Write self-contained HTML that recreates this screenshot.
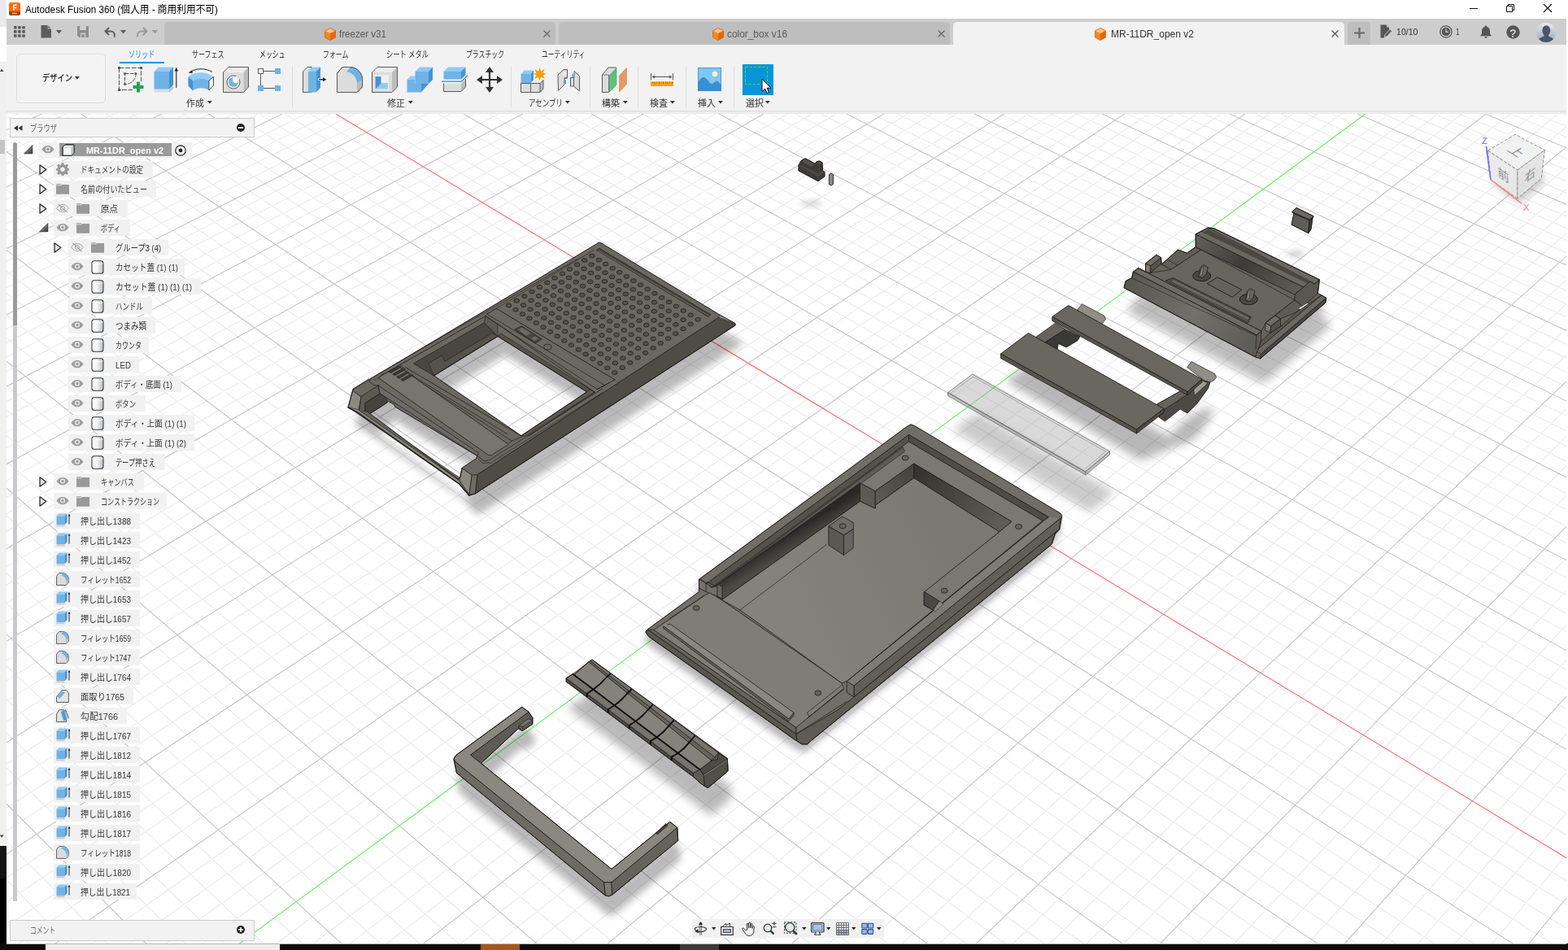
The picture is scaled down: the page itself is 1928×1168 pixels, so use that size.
<!DOCTYPE html><html lang="ja"><head><meta charset="utf-8"><title>Autodesk Fusion 360</title><style>
html,body{margin:0;padding:0}
body{width:1928px;height:1168px;overflow:hidden;position:relative;background:#fff;font-family:"Liberation Sans","Noto Sans CJK JP",sans-serif}
.a{position:absolute}
.t{position:absolute;white-space:nowrap;transform-origin:0 50%;display:block}
.rb{position:absolute;height:20px;background:#f1f1f1}
svg{position:absolute;overflow:visible}
</style></head><body>
<svg class="a" style="left:0;top:0" width="1928" height="1168" viewBox="0 0 1928 1168"><defs><clipPath id="cv"><rect x="8" y="140" width="1918" height="1020"/></clipPath></defs><g clip-path="url(#cv)"><path d="M8.0 146.3L22.0 140.0M8.0 173.4L81.1 140.0M8.0 187.3L110.7 140.0M8.0 201.4L140.2 140.0M8.0 215.6L169.8 140.0M8.0 244.8L229.0 140.0M8.0 259.6L258.5 140.0M8.0 274.8L288.1 140.0M8.0 290.1L317.7 140.0M8.0 321.5L376.8 140.0M8.0 337.5L406.4 140.0M8.0 353.8L436.0 140.0M8.0 370.3L465.6 140.0M8.0 404.2L524.7 140.0M8.0 421.5L554.3 140.0M8.0 439.1L583.9 140.0M8.0 457.0L613.5 140.0M8.0 493.7L672.6 140.0M8.0 512.5L702.2 140.0M8.0 531.6L731.8 140.0M8.0 551.0L761.4 140.0M8.0 590.8L820.6 140.0M8.0 611.2L850.2 140.0M8.0 632.0L879.7 140.0M8.0 653.2L909.3 140.0M8.0 696.6L968.5 140.0M8.0 718.9L998.1 140.0M8.0 741.6L1027.7 140.0M8.0 764.7L1057.3 140.0M8.0 812.2L1116.5 140.0M8.0 836.7L1146.1 140.0M8.0 861.6L1175.7 140.0M8.0 887.0L1205.3 140.0M8.0 939.2L1264.5 140.0M8.0 966.1L1294.1 140.0M8.0 993.5L1323.7 140.0M8.0 1021.5L1353.3 140.0M8.0 1079.2L1412.5 140.0M8.0 1108.9L1442.1 140.0M8.0 1139.3L1471.7 140.0M23.0 1160.0L1501.3 140.0M113.5 1160.0L1560.5 140.0M158.8 1160.0L1590.1 140.0M204.1 1160.0L1619.8 140.0M249.3 1160.0L1649.4 140.0M339.9 1160.0L1708.6 140.0M385.2 1160.0L1738.2 140.0M430.5 1160.0L1767.8 140.0M475.7 1160.0L1797.4 140.0M566.3 1160.0L1856.7 140.0M611.6 1160.0L1886.3 140.0M656.9 1160.0L1915.9 140.0M702.2 1160.0L1926.0 156.0M792.7 1160.0L1926.0 206.3M838.0 1160.0L1926.0 232.4M883.3 1160.0L1926.0 259.2M928.6 1160.0L1926.0 286.8M1019.2 1160.0L1926.0 344.1M1064.5 1160.0L1926.0 374.0M1109.8 1160.0L1926.0 404.8M1155.1 1160.0L1926.0 436.4M1245.7 1160.0L1926.0 502.5M1291.0 1160.0L1926.0 537.0M1336.3 1160.0L1926.0 572.6M1381.6 1160.0L1926.0 609.3M1472.2 1160.0L1926.0 686.2M1517.6 1160.0L1926.0 726.6M1562.9 1160.0L1926.0 768.3M1608.2 1160.0L1926.0 811.4M1698.8 1160.0L1926.0 902.1M1744.1 1160.0L1926.0 949.9M1789.4 1160.0L1926.0 999.4M1834.8 1160.0L1926.0 1050.7M1925.4 1160.0L1926.0 1159.3M8.0 1130.7L35.9 1160.0M8.0 1081.7L83.9 1160.0M8.0 1034.3L131.8 1160.0M8.0 944.0L227.8 1160.0M8.0 901.0L275.8 1160.0M8.0 859.3L323.8 1160.0M8.0 818.9L371.7 1160.0M8.0 741.7L467.7 1160.0M8.0 704.8L515.7 1160.0M8.0 669.0L563.7 1160.0M8.0 634.2L611.7 1160.0M8.0 567.4L707.7 1160.0M8.0 535.4L755.7 1160.0M8.0 504.2L803.7 1160.0M8.0 473.9L851.7 1160.0M8.0 415.6L947.7 1160.0M8.0 387.5L995.7 1160.0M8.0 360.2L1043.7 1160.0M8.0 333.5L1091.7 1160.0M8.0 282.1L1187.7 1160.0M8.0 257.4L1235.7 1160.0M8.0 233.2L1283.7 1160.0M8.0 209.6L1331.8 1160.0M8.0 164.0L1427.8 1160.0M8.0 142.0L1475.8 1160.0M36.5 140.0L1523.8 1160.0M67.9 140.0L1571.8 1160.0M130.7 140.0L1667.9 1160.0M162.0 140.0L1715.9 1160.0M193.4 140.0L1763.9 1160.0M224.8 140.0L1812.0 1160.0M287.5 140.0L1908.0 1160.0M318.9 140.0L1926.0 1141.3M350.3 140.0L1926.0 1111.8M381.7 140.0L1926.0 1083.0M444.4 140.0L1926.0 1027.0M475.8 140.0L1926.0 999.8M507.2 140.0L1926.0 973.1M538.6 140.0L1926.0 946.9M601.3 140.0L1926.0 896.1M632.7 140.0L1926.0 871.3M664.1 140.0L1926.0 847.1M695.5 140.0L1926.0 823.2M758.3 140.0L1926.0 776.8M789.7 140.0L1926.0 754.2M821.1 140.0L1926.0 732.0M852.5 140.0L1926.0 710.2M915.3 140.0L1926.0 667.7M946.7 140.0L1926.0 647.0M978.1 140.0L1926.0 626.6M1009.5 140.0L1926.0 606.6M1072.3 140.0L1926.0 567.5M1103.7 140.0L1926.0 548.4M1135.1 140.0L1926.0 529.7M1166.5 140.0L1926.0 511.2M1229.3 140.0L1926.0 475.2M1260.7 140.0L1926.0 457.6M1292.1 140.0L1926.0 440.2M1323.5 140.0L1926.0 423.2M1386.3 140.0L1926.0 389.8M1417.7 140.0L1926.0 373.5M1449.1 140.0L1926.0 357.4M1480.5 140.0L1926.0 341.6M1543.4 140.0L1926.0 310.7M1574.8 140.0L1926.0 295.5M1606.2 140.0L1926.0 280.6M1637.6 140.0L1926.0 265.9M1700.4 140.0L1926.0 237.1M1731.9 140.0L1926.0 223.0M1763.3 140.0L1926.0 209.0M1794.7 140.0L1926.0 195.3M1857.6 140.0L1926.0 168.5M1889.0 140.0L1926.0 155.3M1920.4 140.0L1926.0 142.3" stroke="#000" stroke-opacity=".08" stroke-width="1.15" fill="none"/>
<path d="M8.0 159.8L51.5 140.0M8.0 230.1L199.4 140.0M8.0 305.7L347.2 140.0M8.0 387.1L495.1 140.0M8.0 475.2L643.0 140.0M8.0 570.7L791.0 140.0M8.0 674.7L938.9 140.0M8.0 788.3L1086.9 140.0M8.0 912.8L1234.9 140.0M8.0 1050.1L1382.9 140.0M68.2 1160.0L1530.9 140.0M521.0 1160.0L1827.0 140.0M747.4 1160.0L1926.0 180.8M973.9 1160.0L1926.0 315.1M1200.4 1160.0L1926.0 468.9M1426.9 1160.0L1926.0 647.2M1653.5 1160.0L1926.0 856.0M1880.1 1160.0L1926.0 1104.0M8.0 988.4L179.8 1160.0M8.0 779.8L419.7 1160.0M8.0 600.3L659.7 1160.0M8.0 444.3L899.7 1160.0M8.0 307.5L1139.7 1160.0M8.0 186.5L1379.8 1160.0M99.3 140.0L1619.9 1160.0M256.2 140.0L1860.0 1160.0M570.0 140.0L1926.0 921.3M726.9 140.0L1926.0 799.8M883.9 140.0L1926.0 688.8M1040.9 140.0L1926.0 586.9M1197.9 140.0L1926.0 493.1M1354.9 140.0L1926.0 406.4M1511.9 140.0L1926.0 326.0M1669.0 140.0L1926.0 251.4M1826.1 140.0L1926.0 181.8" stroke="#000" stroke-opacity=".225" stroke-width="1.15" fill="none"/>
<path d="M413.0 140.0L1926.0 1054.7" stroke="#ff6b6b" stroke-width="1.1" fill="none"/>
<path d="M294.6 1160.0L1679.0 140.0" stroke="#66ee66" stroke-width="1.1" fill="none"/>
<defs><filter id="bl2" x="-30%" y="-30%" width="160%" height="160%"><feGaussianBlur stdDeviation="2"/></filter><filter id="bl3" x="-30%" y="-30%" width="160%" height="160%"><feGaussianBlur stdDeviation="3"/></filter><filter id="bl4" x="-30%" y="-30%" width="160%" height="160%"><feGaussianBlur stdDeviation="4"/></filter><filter id="bl5" x="-30%" y="-30%" width="160%" height="160%"><feGaussianBlur stdDeviation="5"/></filter><filter id="bl6" x="-30%" y="-30%" width="160%" height="160%"><feGaussianBlur stdDeviation="6"/></filter><filter id="bl8" x="-30%" y="-30%" width="160%" height="160%"><feGaussianBlur stdDeviation="8"/></filter></defs><g transform="translate(9,23)" filter="url(#bl5)" opacity=".27"><path d="M733.5 299.9L736.5 298.0L739.8 299.0L883.7 386.3L902.9 396.9L904.4 398.9L903.4 400.5L584.4 606.9L576.9 609.4L564.9 594.9L441.2 507.6L437.4 505.9L428.0 500.9L433.6 480.4L433.9 478.7ZM533.5 461.8L612.0 413.5L721.6 481.8L641.0 535.8ZM455.0 508.7L475.8 495.2L477.7 493.4L484.4 497.1L485.7 500.1L586.9 560.5L585.3 563.9L568.6 574.9L565.6 587.7L563.2 589.1Z" fill="#000" fill-rule="evenodd" /></g><path d="M733.5 299.9L736.5 298.0L739.8 299.0L883.7 386.3L902.9 396.9L904.4 398.9L903.4 400.5L584.4 606.9L576.9 609.4L564.9 594.9L441.2 507.6L437.4 505.9L428.0 500.9L433.6 480.4L433.9 478.7ZM533.5 461.8L612.0 413.5L721.6 481.8L641.0 535.8ZM455.0 508.7L475.8 495.2L477.7 493.4L484.4 497.1L485.7 500.1L586.9 560.5L585.3 563.9L568.6 574.9L565.6 587.7L563.2 589.1Z" fill="#6b6861" fill-rule="evenodd" /><path d="M883.7 390.2L902.9 397.2L904.4 398.9L903.4 400.5L584.4 606.9L586.9 583.6Z" fill="#4f4c46" stroke="#1d1c1a" stroke-width="0.8" stroke-linejoin="round" /><path d="M883.7 386.8L902.9 396.9L883.7 390.2Z" fill="#8b8880" /><path d="M567.7 575.6L580.3 583.9L576.9 608.3L564.9 590.8Z" fill="#8b8880" stroke="#1d1c1a" stroke-width="0.8" stroke-linejoin="round" /><path d="M580.3 583.9L586.9 583.6L584.4 606.9L576.9 608.3Z" fill="#6f6c65" stroke="#1d1c1a" stroke-width="0.7" stroke-linejoin="round" /><path d="M433.6 480.4L444.0 487.7L441.2 504.1L428.0 500.7Z" fill="#8b8880" stroke="#1d1c1a" stroke-width="0.8" stroke-linejoin="round" /><path d="M444.1 487.3L464.9 473.9L467.2 483.7L449.2 495.5L448.5 505.9L441.6 504.3Z" fill="#5d5a53" stroke="#1d1c1a" stroke-width="0.7" stroke-linejoin="round" /><path d="M449.2 495.5L467.2 484.1L476.0 489.6L476.0 494.6L455.0 508.5L449.2 505.3Z" fill="#47443f" stroke="#1d1c1a" stroke-width="0.7" stroke-linejoin="round" /><path d="M441.2 504.1L443.5 503.4L565.6 586.9L564.9 590.8Z" fill="#66635c" /><path d="M428.0 500.9L441.2 504.3L564.9 590.8L564.9 594.9L437.4 506.1Z" fill="#8b8880" /><path d="M441.2 504.1L564.9 590.8" fill="none" stroke="#1d1c1a" stroke-width="0.7" stroke-linejoin="round" stroke-linecap="round" /><path d="M428.0 500.9L437.4 506.4L564.9 595.3L576.9 609.4" fill="none" stroke="#1d1c1a" stroke-width="1.3" stroke-linejoin="round" stroke-linecap="round" /><path d="M467.2 483.7L465.1 474.1L588.6 556.9L586.9 560.5Z" fill="#6c6b67" stroke="#1d1c1a" stroke-width="0.7" stroke-linejoin="round" /><path d="M508.5 446.9L595.3 396.8L612.0 413.5L533.5 462.0Z" fill="#4a4742" stroke="#1d1c1a" stroke-width="0.7" stroke-linejoin="round" /><path d="M526.8 446.9L543.5 436.9L546.9 444.4L605.3 409.4L612.0 413.5L533.5 462.0Z" fill="#55524c" stroke="#1d1c1a" stroke-width="0.6" stroke-linejoin="round" /><path d="M595.3 396.8L597.0 388.5L612.0 398.5L612.0 413.5Z" fill="#5d5a53" stroke="#1d1c1a" stroke-width="0.6" stroke-linejoin="round" /><path d="M611.7 413.4L721.6 481.5L725.2 478.5L615.9 410.0Z" fill="#55524c" stroke="#1d1c1a" stroke-width="0.6" stroke-linejoin="round" /><path d="M721.6 481.8L725.2 478.8L731.1 482.1L645.9 536.1L640.9 535.6Z" fill="#5d5a53" stroke="#1d1c1a" stroke-width="0.6" stroke-linejoin="round" /><path d="M491.8 448.6L597.0 388.5" fill="none" stroke="#1d1c1a" stroke-width="0.8" stroke-linejoin="round" stroke-linecap="round" /><path d="M491.8 448.6L498.5 454.4" fill="none" stroke="#1d1c1a" stroke-width="0.8" stroke-linejoin="round" stroke-linecap="round" /><path d="M597.0 388.5L612.0 398.5L731.1 482.1" fill="none" stroke="#1d1c1a" stroke-width="0.8" stroke-linejoin="round" stroke-linecap="round" /><path d="M731.1 482.1L650.1 536.1" fill="none" stroke="#1d1c1a" stroke-width="0.8" stroke-linejoin="round" stroke-linecap="round" /><path d="M734.4 478.5L756.1 466.8" fill="none" stroke="#1d1c1a" stroke-width="0.8" stroke-linejoin="round" stroke-linecap="round" /><path d="M743.6 473.8L734.4 478.5" fill="none" stroke="#1d1c1a" stroke-width="0.8" stroke-linejoin="round" stroke-linecap="round" /><path d="M598.6 386.0L610.3 379.3L756.1 466.8" fill="none" stroke="#1d1c1a" stroke-width="0.9" stroke-linejoin="round" stroke-linecap="round" /><path d="M598.6 386.0L743.6 473.8L748.6 471.0" fill="none" stroke="#1d1c1a" stroke-width="0.7" stroke-linejoin="round" stroke-linecap="round" /><path d="M612.0 398.5L734.4 478.5" fill="none" stroke="#1d1c1a" stroke-width="0.7" stroke-linejoin="round" stroke-linecap="round" /><path d="M632.9 405.2L641.2 401.0L666.2 416.9L657.9 421.9Z" fill="#4a4742" stroke="#1d1c1a" stroke-width="0.8" stroke-linejoin="round" /><path d="M637.0 405.2L642.0 402.7L652.9 409.4L647.0 412.7Z" fill="#6b6962" /><path d="M652.9 416.0L657.9 413.5L662.1 416.0L657.1 418.9Z" fill="#6b6962" /><ellipse cx="673.4" cy="426.6" rx="4.6" ry="3.4" fill="none" stroke="#1d1c1a" stroke-width=".8"/><path d="M498.5 451.7L642.0 536.5" fill="none" stroke="#1d1c1a" stroke-width="0.8" stroke-linejoin="round" stroke-linecap="round" /><path d="M493.5 455.0L629.5 542.2L642.0 536.5" fill="none" stroke="#1d1c1a" stroke-width="0.7" stroke-linejoin="round" stroke-linecap="round" /><path d="M629.5 542.2L624.5 545.5" fill="none" stroke="#1d1c1a" stroke-width="0.7" stroke-linejoin="round" stroke-linecap="round" /><path d="M465.9 465.0L468.4 461.7L490.1 450.4L623.7 545.2L624.5 546.8L604.5 559.4L601.1 559.9Z" fill="#78756e" stroke="#1d1c1a" stroke-width="0.8" stroke-linejoin="round" /><path d="M506.8 461.7L623.7 533.5" fill="none" stroke="#1d1c1a" stroke-width="0.7" stroke-linejoin="round" stroke-linecap="round" /><path d="M455.9 465.0L454.2 469.2L459.2 473.4L466.7 474.2" fill="none" stroke="#1d1c1a" stroke-width="0.7" stroke-linejoin="round" stroke-linecap="round" /><path d="M586.9 560.5L595.3 566.9L601.1 566.0L642.0 540.2L741.0 477.6" fill="none" stroke="#1d1c1a" stroke-width="0.7" stroke-linejoin="round" stroke-linecap="round" /><path d="M588.6 564.4L593.6 569.4L603.6 568.9L741.0 482.6" fill="none" stroke="#1d1c1a" stroke-width="0.6" stroke-linejoin="round" stroke-linecap="round" /><path d="M477.6 456.7L490.1 449.7L493.1 451.4L480.4 458.7Z" fill="#3a3834" stroke="#1d1c1a" stroke-width="0.5" stroke-linejoin="round" /><path d="M482.6 460.0L495.1 453.0L498.1 454.7L485.4 462.0Z" fill="#3a3834" stroke="#1d1c1a" stroke-width="0.5" stroke-linejoin="round" /><path d="M487.6 463.4L500.1 456.4L503.1 458.0L490.5 465.4Z" fill="#3a3834" stroke="#1d1c1a" stroke-width="0.5" stroke-linejoin="round" /><path d="M492.6 466.7L505.1 459.7L508.1 461.4L495.5 468.7Z" fill="#3a3834" stroke="#1d1c1a" stroke-width="0.5" stroke-linejoin="round" /><path d="M453.8 465.7L433.9 478.4L433.6 480.4" fill="none" stroke="#1d1c1a" stroke-width="0.8" stroke-linejoin="round" stroke-linecap="round" /><path d="M455.9 465.0L597.0 383.5L710.1 318.4" fill="none" stroke="#1d1c1a" stroke-width="0.6" stroke-linejoin="round" stroke-linecap="round" /><path d="M460.1 467.5L491.8 448.6" fill="none" stroke="#1d1c1a" stroke-width="0.6" stroke-linejoin="round" stroke-linecap="round" /><path d="M733.5 307.5L737.1 305.4L873.7 386.8L870.7 389.3Z" fill="#4a4742" stroke="#1d1c1a" stroke-width="0.8" stroke-linejoin="round" /><path d="M736.0 308.4L871.2 388.2" fill="none" stroke="#7b7871" stroke-width="0.8" stroke-linejoin="round" stroke-linecap="round" /><path d="M610.3 379.3L730.1 307.5" fill="none" stroke="#1d1c1a" stroke-width="0.6" stroke-linejoin="round" stroke-linecap="round" /><path d="M884.5 386.8L883.7 390.5" fill="none" stroke="#1d1c1a" stroke-width="0.7" stroke-linejoin="round" stroke-linecap="round" /><g fill="#55524c" stroke="#24231f" stroke-width=".9"><ellipse cx="727.9" cy="314.6" rx="3.3" ry="2.4"/><ellipse cx="718.8" cy="320.0" rx="3.3" ry="2.4"/><ellipse cx="709.7" cy="325.4" rx="3.3" ry="2.4"/><ellipse cx="700.6" cy="330.9" rx="3.3" ry="2.4"/><ellipse cx="691.4" cy="336.4" rx="3.3" ry="2.4"/><ellipse cx="682.1" cy="341.9" rx="3.3" ry="2.4"/><ellipse cx="672.8" cy="347.4" rx="3.3" ry="2.4"/><ellipse cx="663.5" cy="353.0" rx="3.3" ry="2.4"/><ellipse cx="654.1" cy="358.6" rx="3.3" ry="2.4"/><ellipse cx="644.7" cy="364.2" rx="3.3" ry="2.4"/><ellipse cx="635.2" cy="369.8" rx="3.3" ry="2.4"/><ellipse cx="625.7" cy="375.5" rx="3.3" ry="2.4"/><ellipse cx="736.3" cy="319.6" rx="3.3" ry="2.4"/><ellipse cx="727.2" cy="325.1" rx="3.3" ry="2.4"/><ellipse cx="718.1" cy="330.5" rx="3.3" ry="2.4"/><ellipse cx="708.9" cy="336.0" rx="3.3" ry="2.4"/><ellipse cx="699.7" cy="341.5" rx="3.3" ry="2.4"/><ellipse cx="690.5" cy="347.0" rx="3.3" ry="2.4"/><ellipse cx="681.2" cy="352.6" rx="3.3" ry="2.4"/><ellipse cx="671.9" cy="358.2" rx="3.3" ry="2.4"/><ellipse cx="662.5" cy="363.8" rx="3.3" ry="2.4"/><ellipse cx="653.1" cy="369.4" rx="3.3" ry="2.4"/><ellipse cx="643.6" cy="375.1" rx="3.3" ry="2.4"/><ellipse cx="634.1" cy="380.8" rx="3.3" ry="2.4"/><ellipse cx="744.7" cy="324.7" rx="3.3" ry="2.4"/><ellipse cx="735.7" cy="330.1" rx="3.3" ry="2.4"/><ellipse cx="726.5" cy="335.6" rx="3.3" ry="2.4"/><ellipse cx="717.4" cy="341.1" rx="3.3" ry="2.4"/><ellipse cx="708.2" cy="346.7" rx="3.3" ry="2.4"/><ellipse cx="698.9" cy="352.2" rx="3.3" ry="2.4"/><ellipse cx="689.6" cy="357.8" rx="3.3" ry="2.4"/><ellipse cx="680.3" cy="363.4" rx="3.3" ry="2.4"/><ellipse cx="670.9" cy="369.1" rx="3.3" ry="2.4"/><ellipse cx="661.5" cy="374.7" rx="3.3" ry="2.4"/><ellipse cx="652.0" cy="380.4" rx="3.3" ry="2.4"/><ellipse cx="642.5" cy="386.2" rx="3.3" ry="2.4"/><ellipse cx="753.2" cy="329.8" rx="3.3" ry="2.4"/><ellipse cx="744.1" cy="335.2" rx="3.3" ry="2.4"/><ellipse cx="735.0" cy="340.8" rx="3.3" ry="2.4"/><ellipse cx="725.8" cy="346.3" rx="3.3" ry="2.4"/><ellipse cx="716.6" cy="351.8" rx="3.3" ry="2.4"/><ellipse cx="707.4" cy="357.4" rx="3.3" ry="2.4"/><ellipse cx="698.1" cy="363.0" rx="3.3" ry="2.4"/><ellipse cx="688.8" cy="368.7" rx="3.3" ry="2.4"/><ellipse cx="679.4" cy="374.4" rx="3.3" ry="2.4"/><ellipse cx="669.9" cy="380.1" rx="3.3" ry="2.4"/><ellipse cx="660.5" cy="385.8" rx="3.3" ry="2.4"/><ellipse cx="650.9" cy="391.5" rx="3.3" ry="2.4"/><ellipse cx="761.7" cy="334.9" rx="3.3" ry="2.4"/><ellipse cx="752.6" cy="340.4" rx="3.3" ry="2.4"/><ellipse cx="743.5" cy="345.9" rx="3.3" ry="2.4"/><ellipse cx="734.4" cy="351.5" rx="3.3" ry="2.4"/><ellipse cx="725.1" cy="357.1" rx="3.3" ry="2.4"/><ellipse cx="715.9" cy="362.7" rx="3.3" ry="2.4"/><ellipse cx="706.6" cy="368.3" rx="3.3" ry="2.4"/><ellipse cx="697.3" cy="374.0" rx="3.3" ry="2.4"/><ellipse cx="687.9" cy="379.7" rx="3.3" ry="2.4"/><ellipse cx="678.4" cy="385.4" rx="3.3" ry="2.4"/><ellipse cx="668.9" cy="391.1" rx="3.3" ry="2.4"/><ellipse cx="659.4" cy="396.9" rx="3.3" ry="2.4"/><ellipse cx="770.3" cy="340.0" rx="3.3" ry="2.4"/><ellipse cx="761.2" cy="345.5" rx="3.3" ry="2.4"/><ellipse cx="752.1" cy="351.1" rx="3.3" ry="2.4"/><ellipse cx="742.9" cy="356.7" rx="3.3" ry="2.4"/><ellipse cx="733.7" cy="362.3" rx="3.3" ry="2.4"/><ellipse cx="724.4" cy="367.9" rx="3.3" ry="2.4"/><ellipse cx="715.1" cy="373.6" rx="3.3" ry="2.4"/><ellipse cx="705.8" cy="379.3" rx="3.3" ry="2.4"/><ellipse cx="696.4" cy="385.0" rx="3.3" ry="2.4"/><ellipse cx="687.0" cy="390.8" rx="3.3" ry="2.4"/><ellipse cx="677.5" cy="396.5" rx="3.3" ry="2.4"/><ellipse cx="668.0" cy="402.3" rx="3.3" ry="2.4"/><ellipse cx="778.9" cy="345.2" rx="3.3" ry="2.4"/><ellipse cx="769.8" cy="350.7" rx="3.3" ry="2.4"/><ellipse cx="760.7" cy="356.3" rx="3.3" ry="2.4"/><ellipse cx="751.5" cy="361.9" rx="3.3" ry="2.4"/><ellipse cx="742.3" cy="367.5" rx="3.3" ry="2.4"/><ellipse cx="733.0" cy="373.2" rx="3.3" ry="2.4"/><ellipse cx="723.7" cy="378.9" rx="3.3" ry="2.4"/><ellipse cx="714.4" cy="384.6" rx="3.3" ry="2.4"/><ellipse cx="705.0" cy="390.4" rx="3.3" ry="2.4"/><ellipse cx="695.6" cy="396.2" rx="3.3" ry="2.4"/><ellipse cx="686.1" cy="402.0" rx="3.3" ry="2.4"/><ellipse cx="676.5" cy="407.8" rx="3.3" ry="2.4"/><ellipse cx="787.5" cy="350.3" rx="3.3" ry="2.4"/><ellipse cx="778.4" cy="355.9" rx="3.3" ry="2.4"/><ellipse cx="769.3" cy="361.5" rx="3.3" ry="2.4"/><ellipse cx="760.1" cy="367.2" rx="3.3" ry="2.4"/><ellipse cx="750.9" cy="372.8" rx="3.3" ry="2.4"/><ellipse cx="741.7" cy="378.5" rx="3.3" ry="2.4"/><ellipse cx="732.4" cy="384.2" rx="3.3" ry="2.4"/><ellipse cx="723.0" cy="390.0" rx="3.3" ry="2.4"/><ellipse cx="713.6" cy="395.8" rx="3.3" ry="2.4"/><ellipse cx="704.2" cy="401.6" rx="3.3" ry="2.4"/><ellipse cx="694.7" cy="407.4" rx="3.3" ry="2.4"/><ellipse cx="685.2" cy="413.3" rx="3.3" ry="2.4"/><ellipse cx="796.2" cy="355.5" rx="3.3" ry="2.4"/><ellipse cx="787.1" cy="361.2" rx="3.3" ry="2.4"/><ellipse cx="778.0" cy="366.8" rx="3.3" ry="2.4"/><ellipse cx="768.8" cy="372.5" rx="3.3" ry="2.4"/><ellipse cx="759.6" cy="378.1" rx="3.3" ry="2.4"/><ellipse cx="750.3" cy="383.9" rx="3.3" ry="2.4"/><ellipse cx="741.0" cy="389.6" rx="3.3" ry="2.4"/><ellipse cx="731.7" cy="395.4" rx="3.3" ry="2.4"/><ellipse cx="722.3" cy="401.2" rx="3.3" ry="2.4"/><ellipse cx="712.8" cy="407.0" rx="3.3" ry="2.4"/><ellipse cx="703.4" cy="412.9" rx="3.3" ry="2.4"/><ellipse cx="693.8" cy="418.8" rx="3.3" ry="2.4"/><ellipse cx="804.9" cy="360.8" rx="3.3" ry="2.4"/><ellipse cx="795.8" cy="366.4" rx="3.3" ry="2.4"/><ellipse cx="786.7" cy="372.1" rx="3.3" ry="2.4"/><ellipse cx="777.5" cy="377.8" rx="3.3" ry="2.4"/><ellipse cx="768.3" cy="383.5" rx="3.3" ry="2.4"/><ellipse cx="759.1" cy="389.2" rx="3.3" ry="2.4"/><ellipse cx="749.8" cy="395.0" rx="3.3" ry="2.4"/><ellipse cx="740.4" cy="400.8" rx="3.3" ry="2.4"/><ellipse cx="731.0" cy="406.6" rx="3.3" ry="2.4"/><ellipse cx="721.6" cy="412.5" rx="3.3" ry="2.4"/><ellipse cx="712.1" cy="418.4" rx="3.3" ry="2.4"/><ellipse cx="702.5" cy="424.3" rx="3.3" ry="2.4"/><ellipse cx="813.7" cy="366.0" rx="3.3" ry="2.4"/><ellipse cx="804.6" cy="371.7" rx="3.3" ry="2.4"/><ellipse cx="795.5" cy="377.4" rx="3.3" ry="2.4"/><ellipse cx="786.3" cy="383.1" rx="3.3" ry="2.4"/><ellipse cx="777.1" cy="388.8" rx="3.3" ry="2.4"/><ellipse cx="767.8" cy="394.6" rx="3.3" ry="2.4"/><ellipse cx="758.5" cy="400.4" rx="3.3" ry="2.4"/><ellipse cx="749.2" cy="406.3" rx="3.3" ry="2.4"/><ellipse cx="739.8" cy="412.1" rx="3.3" ry="2.4"/><ellipse cx="730.3" cy="418.0" rx="3.3" ry="2.4"/><ellipse cx="720.8" cy="423.9" rx="3.3" ry="2.4"/><ellipse cx="711.3" cy="429.9" rx="3.3" ry="2.4"/><ellipse cx="822.5" cy="371.3" rx="3.3" ry="2.4"/><ellipse cx="813.4" cy="377.0" rx="3.3" ry="2.4"/><ellipse cx="804.3" cy="382.7" rx="3.3" ry="2.4"/><ellipse cx="795.1" cy="388.5" rx="3.3" ry="2.4"/><ellipse cx="785.9" cy="394.2" rx="3.3" ry="2.4"/><ellipse cx="776.6" cy="400.0" rx="3.3" ry="2.4"/><ellipse cx="767.3" cy="405.9" rx="3.3" ry="2.4"/><ellipse cx="758.0" cy="411.7" rx="3.3" ry="2.4"/><ellipse cx="748.6" cy="417.6" rx="3.3" ry="2.4"/><ellipse cx="739.1" cy="423.5" rx="3.3" ry="2.4"/><ellipse cx="729.6" cy="429.5" rx="3.3" ry="2.4"/><ellipse cx="720.1" cy="435.5" rx="3.3" ry="2.4"/><ellipse cx="831.4" cy="376.6" rx="3.3" ry="2.4"/><ellipse cx="822.3" cy="382.3" rx="3.3" ry="2.4"/><ellipse cx="813.2" cy="388.1" rx="3.3" ry="2.4"/><ellipse cx="804.0" cy="393.9" rx="3.3" ry="2.4"/><ellipse cx="794.8" cy="399.7" rx="3.3" ry="2.4"/><ellipse cx="785.5" cy="405.5" rx="3.3" ry="2.4"/><ellipse cx="776.2" cy="411.3" rx="3.3" ry="2.4"/><ellipse cx="766.8" cy="417.2" rx="3.3" ry="2.4"/><ellipse cx="757.4" cy="423.1" rx="3.3" ry="2.4"/><ellipse cx="748.0" cy="429.1" rx="3.3" ry="2.4"/><ellipse cx="738.5" cy="435.1" rx="3.3" ry="2.4"/><ellipse cx="728.9" cy="441.1" rx="3.3" ry="2.4"/><ellipse cx="840.3" cy="382.0" rx="3.3" ry="2.4"/><ellipse cx="831.2" cy="387.7" rx="3.3" ry="2.4"/><ellipse cx="822.0" cy="393.5" rx="3.3" ry="2.4"/><ellipse cx="812.9" cy="399.3" rx="3.3" ry="2.4"/><ellipse cx="803.6" cy="405.1" rx="3.3" ry="2.4"/><ellipse cx="794.4" cy="411.0" rx="3.3" ry="2.4"/><ellipse cx="785.1" cy="416.8" rx="3.3" ry="2.4"/><ellipse cx="775.7" cy="422.8" rx="3.3" ry="2.4"/><ellipse cx="766.3" cy="428.7" rx="3.3" ry="2.4"/><ellipse cx="756.8" cy="434.7" rx="3.3" ry="2.4"/><ellipse cx="747.3" cy="440.7" rx="3.3" ry="2.4"/><ellipse cx="737.8" cy="446.7" rx="3.3" ry="2.4"/><ellipse cx="849.2" cy="387.3" rx="3.3" ry="2.4"/><ellipse cx="840.1" cy="393.1" rx="3.3" ry="2.4"/><ellipse cx="831.0" cy="398.9" rx="3.3" ry="2.4"/><ellipse cx="821.8" cy="404.7" rx="3.3" ry="2.4"/><ellipse cx="812.6" cy="410.6" rx="3.3" ry="2.4"/><ellipse cx="803.3" cy="416.5" rx="3.3" ry="2.4"/><ellipse cx="794.0" cy="422.4" rx="3.3" ry="2.4"/><ellipse cx="784.6" cy="428.3" rx="3.3" ry="2.4"/><ellipse cx="775.2" cy="434.3" rx="3.3" ry="2.4"/><ellipse cx="765.8" cy="440.3" rx="3.3" ry="2.4"/><ellipse cx="756.3" cy="446.3" rx="3.3" ry="2.4"/><ellipse cx="746.7" cy="452.4" rx="3.3" ry="2.4"/><ellipse cx="858.2" cy="392.7" rx="3.3" ry="2.4"/><ellipse cx="849.1" cy="398.5" rx="3.3" ry="2.4"/><ellipse cx="840.0" cy="404.3" rx="3.3" ry="2.4"/><ellipse cx="830.8" cy="410.2" rx="3.3" ry="2.4"/><ellipse cx="821.6" cy="416.1" rx="3.3" ry="2.4"/><ellipse cx="812.3" cy="422.0" rx="3.3" ry="2.4"/><ellipse cx="803.0" cy="427.9" rx="3.3" ry="2.4"/><ellipse cx="793.6" cy="433.9" rx="3.3" ry="2.4"/><ellipse cx="784.2" cy="439.9" rx="3.3" ry="2.4"/><ellipse cx="774.8" cy="445.9" rx="3.3" ry="2.4"/><ellipse cx="765.3" cy="452.0" rx="3.3" ry="2.4"/><ellipse cx="755.7" cy="458.1" rx="3.3" ry="2.4"/></g><path d="M733.5 299.9L736.5 298.0L739.8 299.0L883.7 386.3L902.9 396.9L904.4 398.9L903.4 400.5L584.4 606.9L576.9 609.4L564.9 594.9L441.2 507.6L437.4 505.9L428.0 500.9L433.6 480.4L433.9 478.7ZM533.5 461.8L612.0 413.5L721.6 481.8L641.0 535.8ZM455.0 508.7L475.8 495.2L477.7 493.4L484.4 497.1L485.7 500.1L586.9 560.5L585.3 563.9L568.6 574.9L565.6 587.7L563.2 589.1Z" fill="none" fill-rule="evenodd" stroke="#1d1c1a" stroke-width="1" stroke-linejoin="round" /><defs><linearGradient id="m2a" gradientUnits="userSpaceOnUse" x1="970.0" y1="656.2" x2="980.0" y2="672.5"><stop offset="0" stop-color="#2a2825"/><stop offset="1" stop-color="#4d4a45"/></linearGradient><linearGradient id="m2b" gradientUnits="userSpaceOnUse" x1="1123.8" y1="575.0" x2="1230.0" y2="650.0"><stop offset="0" stop-color="#34322e"/><stop offset="1" stop-color="#605d56"/></linearGradient><linearGradient id="m2c" gradientUnits="userSpaceOnUse" x1="1076.2" y1="610.0" x2="1123.8" y2="580.0"><stop offset="0" stop-color="#5e5b54"/><stop offset="1" stop-color="#46433e"/></linearGradient><linearGradient id="m2f" gradientUnits="userSpaceOnUse" x1="950.0" y1="735.0" x2="1175.0" y2="635.0"><stop offset="0" stop-color="#85827b"/><stop offset="1" stop-color="#7b7871"/></linearGradient></defs><g transform="translate(-2,9)" filter="url(#bl5)" opacity=".30"><path d="M1115.0 524.5L1120.0 521.8L1125.5 524.0L1304.0 631.2L1305.8 634.5L1302.9 650.4L1297.4 656.3L1293.3 668.9L997.5 910.5L992.5 915.0L986.2 915.0L977.5 909.5L797.5 782.5L793.8 777.0L796.2 773.8L859.5 727.5L859.5 712.5Z" fill="#000" /></g><path d="M1115.0 524.5L1120.0 521.8L1125.5 524.0L1304.0 631.2L1305.8 634.5L1302.9 650.4L1297.4 656.3L1293.3 668.9L997.5 910.5L992.5 915.0L986.2 915.0L977.5 909.5L797.5 782.5L793.8 777.0L796.2 773.8L859.5 727.5L859.5 712.5Z" fill="#726f68" /><path d="M1304.2 636.8L1302.9 650.4L1050.0 857.0L1050.0 843.0Z" fill="#625f58" stroke="#1d1c1a" stroke-width="0.8" stroke-linejoin="round" /><path d="M1302.9 650.4L1297.4 656.3L1293.3 668.9L997.5 910.5L992.5 915.0L986.2 915.0L978.8 910.0L978.8 902.5L1030.0 873.0L1050.0 857.0Z" fill="#5e5b54" stroke="#1d1c1a" stroke-width="0.8" stroke-linejoin="round" /><path d="M1289.1 635.7L1304.2 636.8L1050.0 843.0L1041.2 837.5Z" fill="#7f7c75" /><path d="M1304.2 636.8L1050.0 843.0" fill="none" stroke="#1d1c1a" stroke-width="0.8" stroke-linejoin="round" stroke-linecap="round" /><path d="M1289.1 635.7L1041.2 837.5" fill="none" stroke="#1d1c1a" stroke-width="0.8" stroke-linejoin="round" stroke-linecap="round" /><path d="M1041.2 837.5L1050.0 843.0L1050.0 857.0L1041.2 851.2Z" fill="#6d6a64" stroke="#1d1c1a" stroke-width="0.8" stroke-linejoin="round" /><path d="M1120.0 521.8L1125.5 524.0L1304.0 631.2L1305.8 634.5L1304.2 636.8L1289.1 635.7L1117.5 534.5L868.8 717.5L860.0 711.2L1115.0 524.5Z" fill="#716e67" /><path d="M860.0 711.2L868.8 717.5L1117.5 534.5L1289.1 635.7" fill="none" stroke="#1d1c1a" stroke-width="0.8" stroke-linejoin="round" stroke-linecap="round" /><path d="M1117.5 534.5L1289.1 635.7L1281.9 640.3L1117.5 543.0Z" fill="#4f4c47" stroke="#1d1c1a" stroke-width="0.7" stroke-linejoin="round" /><path d="M1117.5 534.5L1117.5 543.0L875.0 722.5L868.8 717.5Z" fill="#55524c" stroke="#1d1c1a" stroke-width="0.7" stroke-linejoin="round" /><path d="M1117.5 543.0L1281.9 640.3L1041.2 837.5L1147.5 750.0L1155.0 739.2L1136.2 727.5L1228.8 653.8L1243.8 641.2L1123.8 570.0L1076.2 603.8L1057.5 593.8L882.5 718.8L875.0 722.5Z" fill="#7b7871" stroke="#1d1c1a" stroke-width="0.7" stroke-linejoin="round" /><path d="M1110.0 550.0L878.8 721.2" fill="none" stroke="#1d1c1a" stroke-width="0.7" stroke-linejoin="round" stroke-linecap="round" /><path d="M1110.0 550.0L1112.5 555.0L1056.2 596.2L882.5 718.8L878.8 721.2Z" fill="#5f5c55" stroke="#1d1c1a" stroke-width="0.6" stroke-linejoin="round" /><path d="M1281.9 640.3L1041.2 837.5" fill="none" stroke="#1d1c1a" stroke-width="0.6" stroke-linejoin="round" stroke-linecap="round" /><path d="M887.5 737.5L1057.5 616.2L1076.2 625.0L1076.2 621.2L1123.8 587.5L1228.8 653.8L1136.2 728.0L1136.2 743.8L1147.5 750.0L1041.2 837.5L1035.0 840.0L910.0 750.0L887.5 737.5Z" fill="url(#m2f)" stroke="#1d1c1a" stroke-width="0.8" stroke-linejoin="round" /><path d="M910.0 750.0L1016.2 669.5" fill="none" stroke="#1d1c1a" stroke-width="0.7" stroke-linejoin="round" stroke-linecap="round" /><path d="M882.5 718.8L1057.5 593.8L1057.5 616.2L887.5 737.5Z" fill="url(#m2a)" stroke="#1d1c1a" stroke-width="0.8" stroke-linejoin="round" /><path d="M882.5 718.8L887.5 722.5L887.5 737.5L882.5 733.8Z" fill="#5a5751" stroke="#1d1c1a" stroke-width="0.7" stroke-linejoin="round" /><path d="M1057.5 593.8L1076.2 603.8L1076.2 625.0L1057.5 616.2Z" fill="#5d5a54" stroke="#1d1c1a" stroke-width="0.8" stroke-linejoin="round" /><path d="M1076.2 603.8L1123.8 570.0L1123.8 587.5L1076.2 621.2Z" fill="url(#m2c)" stroke="#1d1c1a" stroke-width="0.8" stroke-linejoin="round" /><path d="M1123.8 570.0L1243.8 641.2L1228.8 653.8L1123.8 587.5Z" fill="url(#m2b)" stroke="#1d1c1a" stroke-width="0.8" stroke-linejoin="round" /><path d="M1018.8 647.0L1035.5 635.0L1049.2 642.5L1049.2 650.5L1037.5 658.0Z" fill="#6f6c65" stroke="#1d1c1a" stroke-width="0.8" stroke-linejoin="round" /><path d="M1018.8 647.0L1037.5 658.0L1037.5 682.5L1018.8 670.0Z" fill="#5b5852" stroke="#1d1c1a" stroke-width="0.8" stroke-linejoin="round" /><path d="M1037.5 658.0L1049.2 650.5L1049.2 673.8L1037.5 682.5Z" fill="#676460" stroke="#1d1c1a" stroke-width="0.8" stroke-linejoin="round" /><path d="M1136.2 727.5L1155.0 739.2L1147.5 750.0L1136.2 743.8Z" fill="#4b4843" stroke="#1d1c1a" stroke-width="0.8" stroke-linejoin="round" /><path d="M1155.0 739.2L1160.0 742.5L1150.0 751.8L1147.5 750.0Z" fill="#8a877f" stroke="#1d1c1a" stroke-width="0.5" stroke-linejoin="round" /><path d="M859.5 712.5L868.0 717.0L868.0 727.5L859.5 723.0Z" fill="#75726b" stroke="#1d1c1a" stroke-width="0.8" stroke-linejoin="round" /><path d="M882.0 718.0L888.0 721.5L888.0 736.2L882.0 733.0Z" fill="#6a6760" stroke="#1d1c1a" stroke-width="0.8" stroke-linejoin="round" /><path d="M868.0 727.5L882.0 733.0" fill="none" stroke="#1d1c1a" stroke-width="0.7" stroke-linejoin="round" stroke-linecap="round" /><path d="M868.0 717.0L870.0 715.0L882.0 722.5" fill="none" stroke="#1d1c1a" stroke-width="0.6" stroke-linejoin="round" stroke-linecap="round" /><path d="M803.8 774.5L865.0 733.0L872.5 728.8L888.0 738.0L1034.5 839.5L1037.5 846.2L978.8 894.5Z" fill="#807d76" stroke="#1d1c1a" stroke-width="0.8" stroke-linejoin="round" /><path d="M823.8 760.0L865.0 733.0" fill="none" stroke="#1d1c1a" stroke-width="0.7" stroke-linejoin="round" stroke-linecap="round" /><path d="M992.5 876.2L1034.5 843.0" fill="none" stroke="#1d1c1a" stroke-width="0.7" stroke-linejoin="round" stroke-linecap="round" /><path d="M995.0 881.2L1037.5 847.5" fill="none" stroke="#1d1c1a" stroke-width="0.7" stroke-linejoin="round" stroke-linecap="round" /><path d="M992.5 876.2L995.0 881.2" fill="none" stroke="#1d1c1a" stroke-width="0.7" stroke-linejoin="round" stroke-linecap="round" /><path d="M816.2 770.0L823.8 767.0L976.2 876.2L970.0 883.8Z" fill="#8a877f" stroke="#1d1c1a" stroke-width="0.8" stroke-linejoin="round" /><path d="M816.2 770.0L970.0 883.8L970.0 879.5L817.5 766.2Z" fill="#8a877f" /><path d="M815.0 772.0L816.2 770.0L970.0 883.8L976.2 876.2L976.2 879.5L969.5 887.0Z" fill="#5f5c55" stroke="#1d1c1a" stroke-width="0.7" stroke-linejoin="round" /><path d="M796.2 773.8L803.8 774.5L978.8 894.5L978.8 902.5Z" fill="#66635c" stroke="#1d1c1a" stroke-width="0.7" stroke-linejoin="round" /><path d="M793.8 777.0L796.2 773.8L978.8 902.5L980.0 909.5L977.5 909.5L797.5 782.5Z" fill="#59564f" stroke="#1d1c1a" stroke-width="0.8" stroke-linejoin="round" /><path d="M978.8 894.5L978.8 902.5L1041.2 862.5" fill="none" stroke="#1d1c1a" stroke-width="0.7" stroke-linejoin="round" stroke-linecap="round" /><ellipse cx="1113.2" cy="563.0" rx="4" ry="3" fill="#66635c" stroke="#1d1c1a" stroke-width=".8"/><ellipse cx="1252.5" cy="647.5" rx="4" ry="3" fill="#66635c" stroke="#1d1c1a" stroke-width=".8"/><ellipse cx="1161.2" cy="726.2" rx="4" ry="3" fill="#66635c" stroke="#1d1c1a" stroke-width=".8"/><ellipse cx="1036.2" cy="646.8" rx="4" ry="3" fill="#66635c" stroke="#1d1c1a" stroke-width=".8"/><ellipse cx="856.2" cy="747.5" rx="4" ry="3" fill="#66635c" stroke="#1d1c1a" stroke-width=".8"/><ellipse cx="1005.8" cy="852.0" rx="4" ry="3" fill="#66635c" stroke="#1d1c1a" stroke-width=".8"/><path d="M1115.0 524.5L1120.0 521.8L1125.5 524.0L1304.0 631.2L1305.8 634.5L1302.9 650.4L1297.4 656.3L1293.3 668.9L997.5 910.5L992.5 915.0L986.2 915.0L977.5 909.5L797.5 782.5L793.8 777.0L796.2 773.8L859.5 727.5L859.5 712.5Z" fill="none" stroke="#1d1c1a" stroke-width="1" stroke-linejoin="round" /><g transform="translate(6,46)" filter="url(#bl6)" opacity=".20"><path d="M1165.5 482.5L1195.8 460.0L1364.5 559.0L1335.0 584.0Z" fill="#000" /></g><path d="M1165.5 482.5L1195.8 460.0L1364.5 555.0L1334.5 580.0Z" fill="#9a9a9a" stroke="#6a6a6a" stroke-width="0.8" stroke-linejoin="round" fill-opacity=".38"/><path d="M1165.5 482.5L1165.5 486.5L1335.0 584.0L1364.5 559.0L1364.5 555.0L1334.5 580.0Z" fill="#8c8c8c" stroke="#6a6a6a" stroke-width="0.8" stroke-linejoin="round" fill-opacity=".5"/><path d="M1169.5 483.0L1196.5 463.2L1359.5 555.2L1334.5 576.0" fill="none" stroke="#8a8a8a" stroke-width="0.6" stroke-linejoin="round" stroke-linecap="round" /><path d="M1334.5 580.0L1335.0 584.0" fill="none" stroke="#6a6a6a" stroke-width="0.7" stroke-linejoin="round" stroke-linecap="round" /><g transform="translate(6,34)" filter="url(#bl6)" opacity=".28"><path d="M1230.5 435.0L1264.5 409.5L1431.2 502.5L1453.8 479.5L1477.5 467.0L1487.5 470.0L1471.2 496.2L1460.0 507.5L1432.5 517.5L1397.5 532.5Z" fill="#000" fill-rule="evenodd" /></g><path d="M1324.5 381.0L1330.5 373.8L1357.5 388.0L1359.5 392.5L1356.0 397.0L1350.0 400.0Z" fill="#928e85" stroke="#1d1c1a" stroke-width="0.7" stroke-linejoin="round" /><path d="M1459.5 451.5L1465.0 444.5L1493.5 459.5L1495.5 464.0L1492.0 468.0L1485.0 471.2Z" fill="#928e85" stroke="#1d1c1a" stroke-width="0.7" stroke-linejoin="round" /><path d="M1273.8 414.5L1297.5 397.5L1310.0 405.0L1282.5 422.5Z" fill="#66635c" stroke="#1d1c1a" stroke-width="0.8" stroke-linejoin="round" /><path d="M1282.5 422.5L1310.0 405.0L1328.0 413.8L1325.0 418.8L1311.2 427.0L1301.2 422.5L1300.0 431.2Z" fill="#3b3935" stroke="#1d1c1a" stroke-width="0.8" stroke-linejoin="round" /><path d="M1422.5 497.0L1453.8 479.5L1477.5 467.0L1488.0 470.0L1485.5 477.5L1472.0 496.2L1460.0 508.0L1451.2 503.0L1432.5 518.0L1425.0 513.0Z" fill="#4d4a45" stroke="#1d1c1a" stroke-width="0.8" stroke-linejoin="round" /><path d="M1467.5 477.5L1478.0 467.5L1485.0 471.2L1468.8 486.2Z" fill="#a09c92" stroke="#1d1c1a" stroke-width="0.6" stroke-linejoin="round" /><path d="M1422.5 497.0L1453.8 479.5L1460.0 485.0L1431.2 503.8Z" fill="#66635c" stroke="#1d1c1a" stroke-width="0.7" stroke-linejoin="round" /><path d="M1293.8 389.5L1313.8 375.5L1478.0 466.2L1460.0 481.8Z" fill="#69665f" stroke="#1d1c1a" stroke-width="0.9" stroke-linejoin="round" /><path d="M1293.8 389.5L1460.0 481.8L1460.0 485.5L1293.8 394.5Z" fill="#57544e" stroke="#1d1c1a" stroke-width="0.8" stroke-linejoin="round" /><path d="M1460.0 481.8L1478.0 466.2L1478.0 470.0L1460.0 485.5Z" fill="#4d4a45" stroke="#1d1c1a" stroke-width="0.8" stroke-linejoin="round" /><path d="M1230.5 435.0L1264.5 409.5L1431.2 502.5L1397.5 528.0Z" fill="#6a675f" stroke="#1d1c1a" stroke-width="0.9" stroke-linejoin="round" /><path d="M1230.5 435.0L1397.5 528.0L1397.5 533.0L1230.5 440.5Z" fill="#57544e" stroke="#1d1c1a" stroke-width="0.8" stroke-linejoin="round" /><path d="M1397.5 528.0L1431.2 502.5L1431.2 507.0L1397.5 533.0Z" fill="#4d4a45" stroke="#1d1c1a" stroke-width="0.8" stroke-linejoin="round" /><defs><linearGradient id="m5a" gradientUnits="userSpaceOnUse" x1="1386.7" y1="345.5" x2="1545.3" y2="428.9"><stop offset="0" stop-color="#55534d"/><stop offset="1" stop-color="#5a5852"/></linearGradient><linearGradient id="m5f" gradientUnits="userSpaceOnUse" x1="1386.7" y1="348.8" x2="1544.5" y2="425.6"><stop offset="0" stop-color="#595751"/><stop offset=".5" stop-color="#72706a"/><stop offset="1" stop-color="#5d5b55"/></linearGradient><linearGradient id="m5w" gradientUnits="userSpaceOnUse" x1="1470.2" y1="295.4" x2="1597.0" y2="362.2"><stop offset="0" stop-color="#615f59"/><stop offset=".45" stop-color="#3e3c38"/><stop offset="1" stop-color="#5f5d57"/></linearGradient></defs><g transform="translate(5,30)" filter="url(#bl6)" opacity=".26"><path d="M1382.0 353.8L1384.2 345.5L1391.7 341.8L1393.4 334.1L1399.7 329.6L1408.4 334.1L1408.7 323.8L1421.8 313.4L1427.6 316.8L1428.1 325.1L1448.5 307.1L1459.3 311.2L1470.2 303.7L1470.2 287.9L1485.2 280.0L1492.7 280.7L1622.4 343.8L1620.4 360.5L1630.8 366.3L1629.8 372.2L1549.5 441.0L1543.6 439.0Z" fill="#000" /></g><path d="M1382.0 353.8L1384.2 345.5L1391.7 341.8L1393.4 334.1L1399.7 329.6L1408.4 334.1L1408.7 323.8L1421.8 313.4L1427.6 316.8L1428.1 325.1L1448.5 307.1L1459.3 311.2L1470.2 303.7L1470.2 287.9L1485.2 280.0L1492.7 280.7L1622.4 343.8L1620.4 360.5L1630.8 366.3L1629.8 372.2L1549.5 441.0L1543.6 439.0Z" fill="#67645d" /><path d="M1470.2 287.9L1602.9 353.0L1592.0 362.2L1470.2 303.7Z" fill="url(#m5w)" stroke="#1d1c1a" stroke-width="0.8" stroke-linejoin="round" /><path d="M1470.2 287.9L1485.2 280.0L1492.7 280.7L1622.4 343.8L1616.7 349.1L1610.4 346.3L1602.9 353.0Z" fill="#6b6861" stroke="#1d1c1a" stroke-width="0.8" stroke-linejoin="round" /><path d="M1476.8 284.2L1610.4 346.3" fill="none" stroke="#1d1c1a" stroke-width="0.7" stroke-linejoin="round" stroke-linecap="round" /><path d="M1485.2 280.0L1616.7 349.1" fill="none" stroke="#1d1c1a" stroke-width="0.7" stroke-linejoin="round" stroke-linecap="round" /><path d="M1479.3 285.4L1485.2 281.7L1612.9 346.3L1607.9 348.8Z" fill="#4b4843" /><path d="M1602.9 353.0L1610.4 346.3L1616.7 349.1L1622.4 343.8L1620.4 360.5L1602.1 377.2L1592.0 368.8L1592.0 362.2Z" fill="#5a5751" stroke="#1d1c1a" stroke-width="0.8" stroke-linejoin="round" /><path d="M1428.1 325.1L1448.5 307.1L1459.3 311.2L1470.2 303.7L1476.8 307.1L1440.1 331.3Z" fill="#615e58" stroke="#1d1c1a" stroke-width="0.7" stroke-linejoin="round" /><path d="M1436.8 320.4L1448.5 326.3" fill="none" stroke="#1d1c1a" stroke-width="0.6" stroke-linejoin="round" stroke-linecap="round" /><path d="M1440.1 331.3L1476.8 307.1L1592.0 368.8L1557.0 395.6L1551.1 407.2L1399.7 329.6L1408.4 334.1L1414.7 335.5Z" fill="#68655e" stroke="#1d1c1a" stroke-width="0.7" stroke-linejoin="round" /><path d="M1592.0 368.8L1602.1 377.2L1593.7 383.9L1574.5 391.9L1567.8 388.0Z" fill="#5f5c56" stroke="#1d1c1a" stroke-width="0.7" stroke-linejoin="round" /><path d="M1597.0 379.2L1607.1 373.0L1611.6 374.9L1601.7 381.5Z" fill="#f6f6f6" /><path d="M1624.6 363.0L1630.8 366.3L1550.3 435.6L1544.5 430.9Z" fill="#6b6861" stroke="#1d1c1a" stroke-width="0.8" stroke-linejoin="round" /><path d="M1630.8 366.3L1629.8 372.2L1549.5 441.0L1550.3 435.6Z" fill="#4d4a45" stroke="#1d1c1a" stroke-width="0.8" stroke-linejoin="round" /><path d="M1593.7 383.9L1624.6 363.0L1544.5 430.9L1551.1 418.9L1562.0 408.9L1574.5 401.4Z" fill="#5a5751" stroke="#1d1c1a" stroke-width="0.7" stroke-linejoin="round" /><path d="M1556.1 397.2L1567.8 388.0L1574.5 391.9L1562.8 400.9Z" fill="#6f6c65" stroke="#1d1c1a" stroke-width="0.8" stroke-linejoin="round" /><path d="M1556.1 397.2L1562.8 400.9L1562.0 409.2L1555.3 405.9Z" fill="#7b7871" stroke="#1d1c1a" stroke-width="0.8" stroke-linejoin="round" /><path d="M1562.8 400.9L1574.5 391.9L1574.5 401.4L1562.0 409.2Z" fill="#55524c" stroke="#1d1c1a" stroke-width="0.8" stroke-linejoin="round" /><path d="M1393.4 334.1L1399.7 329.6L1551.1 407.2L1545.0 411.9Z" fill="#6d6a63" stroke="#1d1c1a" stroke-width="0.8" stroke-linejoin="round" /><path d="M1391.7 341.8L1393.4 334.1L1545.0 411.9L1551.1 407.2L1550.3 419.8L1543.6 439.0L1382.0 353.8L1384.2 345.5Z" fill="url(#m5f)" stroke="#1d1c1a" stroke-width="0.8" stroke-linejoin="round" /><path d="M1391.7 341.8L1545.3 413.1" fill="none" stroke="#1d1c1a" stroke-width="0.6" stroke-linejoin="round" stroke-linecap="round" /><path d="M1545.0 411.9L1544.0 428.9" fill="none" stroke="#1d1c1a" stroke-width="0.7" stroke-linejoin="round" stroke-linecap="round" /><path d="M1408.7 323.8L1421.8 313.4L1427.6 316.8L1414.7 327.1Z" fill="#6f6c65" stroke="#1d1c1a" stroke-width="0.8" stroke-linejoin="round" /><path d="M1408.7 323.8L1414.7 327.1L1414.7 335.5L1408.4 334.1Z" fill="#7b7871" stroke="#1d1c1a" stroke-width="0.8" stroke-linejoin="round" /><path d="M1414.7 327.1L1427.6 316.8L1428.1 324.1L1414.7 335.5Z" fill="#55524c" stroke="#1d1c1a" stroke-width="0.8" stroke-linejoin="round" /><path d="M1433.4 345.0L1442.1 341.6L1538.3 389.7L1534.4 396.9Z" fill="#5a5751" stroke="#1d1c1a" stroke-width="0.8" stroke-linejoin="round" /><path d="M1438.4 345.5L1443.5 343.5L1536.9 390.5L1534.4 393.9Z" fill="#6b6861" stroke="#1d1c1a" stroke-width="0.5" stroke-linejoin="round" /><path d="M1484.4 348.8L1496.9 340.8L1526.9 356.3L1515.2 365.5Z" fill="#65625b" stroke="#1d1c1a" stroke-width="0.9" stroke-linejoin="round" /><ellipse cx="1477.7" cy="339.1" rx="11" ry="6.6" fill="#4a4742" stroke="#1d1c1a" stroke-width="1"/><path d="M1473.5 340.0L1476.0 329.1L1479.7 325.4L1485.2 328.8L1483.5 336.6L1478.5 342.1Z" fill="#66635c" stroke="#1d1c1a" stroke-width="0.8" stroke-linejoin="round" /><path d="M1475.2 338.3L1477.3 329.9L1479.7 327.4L1478.5 336.6L1476.3 340.8Z" fill="#8a877f" stroke="#1d1c1a" stroke-width="0.5" stroke-linejoin="round" /><ellipse cx="1535.3" cy="368.0" rx="11" ry="6.6" fill="#4a4742" stroke="#1d1c1a" stroke-width="1"/><path d="M1531.1 368.8L1533.6 358.0L1537.3 354.3L1542.8 357.7L1541.1 365.5L1536.1 371.0Z" fill="#66635c" stroke="#1d1c1a" stroke-width="0.8" stroke-linejoin="round" /><path d="M1532.8 367.2L1534.9 358.8L1537.3 356.3L1536.1 365.5L1533.9 369.7Z" fill="#8a877f" stroke="#1d1c1a" stroke-width="0.5" stroke-linejoin="round" /><path d="M1382.0 353.8L1384.2 345.5L1391.7 341.8L1393.4 334.1L1399.7 329.6L1408.4 334.1L1408.7 323.8L1421.8 313.4L1427.6 316.8L1428.1 325.1L1448.5 307.1L1459.3 311.2L1470.2 303.7L1470.2 287.9L1485.2 280.0L1492.7 280.7L1622.4 343.8L1620.4 360.5L1630.8 366.3L1629.8 372.2L1549.5 441.0L1543.6 439.0Z" fill="none" stroke="#1d1c1a" stroke-width="1" stroke-linejoin="round" /><ellipse cx="1592.9" cy="312.1" rx="11" ry="4.500" fill="#000" opacity=".16" filter="url(#bl3)"/><path d="M1588.2 276.2L1591.0 262.6L1588.7 260.7L1594.1 255.5L1615.1 265.8L1613.8 268.9L1611.9 281.9L1608.8 286.7Z" fill="#2a2926" stroke="#1d1c1a" stroke-width="1" stroke-linejoin="round" /><path d="M1591.0 262.6L1610.3 271.0L1608.6 286.5L1588.2 276.2Z" fill="#5e5e58" stroke="#1d1c1a" stroke-width="0.9" stroke-linejoin="round" /><path d="M1610.3 271.0L1613.8 268.9L1611.9 281.9L1608.8 286.7Z" fill="#3f3d38" stroke="#1d1c1a" stroke-width="0.8" stroke-linejoin="round" /><path d="M1588.7 260.7L1594.1 255.5L1615.1 265.8L1610.3 270.2Z" fill="#6d6a62" stroke="#1d1c1a" stroke-width="1" stroke-linejoin="round" /><g transform="translate(4,34)" filter="url(#bl6)" opacity=".27"><path d="M696.2 838.1L696.2 833.8L703.8 828.8L706.2 829.4L723.8 813.8L728.1 811.0L894.4 932.5L895.0 948.1L870.0 968.8L862.5 963.8L852.5 955.0Z" fill="#000" /></g><path d="M696.2 838.1L696.2 833.8L703.8 828.8L706.2 829.4L723.8 813.8L728.1 811.0L894.4 932.5L895.0 948.1L870.0 968.8L862.5 963.8L852.5 955.0Z" fill="#55524c" /><path d="M696.2 838.1L696.2 833.8L852.5 950.6L852.5 955.0Z" fill="#4f4c47" stroke="#1d1c1a" stroke-width="0.7" stroke-linejoin="round" /><path d="M696.2 833.8L704.4 828.8L860.6 946.2L852.5 950.6Z" fill="#77746d" stroke="#1d1c1a" stroke-width="0.7" stroke-linejoin="round" /><path d="M704.4 828.8L723.8 813.8L875.0 935.0L860.6 946.2Z" fill="#85827b" stroke="#1d1c1a" stroke-width="0.7" stroke-linejoin="round" /><path d="M723.8 813.8L725.7 812.5L878.7 930.8L875.0 935.0Z" fill="#66635c" stroke="#1d1c1a" stroke-width="0.6" stroke-linejoin="round" /><path d="M725.7 812.5L728.1 811.0L883.1 925.6L878.7 930.8Z" fill="#77746d" stroke="#1d1c1a" stroke-width="0.6" stroke-linejoin="round" /><path d="M883.1 925.6L894.4 932.5L895.0 948.1L870.6 968.5L866.2 966.2L865.0 952.8L860.6 946.2L875.0 935.0L882.5 933.8Z" fill="#4d4a45" stroke="#1d1c1a" stroke-width="0.8" stroke-linejoin="round" /><path d="M865.0 952.8L894.4 933.5L895.0 948.1L870.6 968.5L866.2 966.2Z" fill="#524f49" stroke="#1d1c1a" stroke-width="0.8" stroke-linejoin="round" /><path d="M865.2 953.5L894.0 934.5" fill="none" stroke="#9a978e" stroke-width="0.7" stroke-linejoin="round" stroke-linecap="round" /><path d="M852.5 950.6L860.6 946.2L865.0 952.8L866.2 966.2L862.5 963.8L852.5 955.0Z" fill="#5f5c56" stroke="#1d1c1a" stroke-width="0.7" stroke-linejoin="round" /><path d="M721.7 857.1L721.7 852.8L729.5 847.6Q739.2 840.8 746.5 832.0L751.2 828.0" fill="none" stroke="#0d0d0c" stroke-width="1.9"/><path d="M747.7 876.6L747.7 872.2L755.5 867.2Q764.8 860.7 771.7 852.2L777.0 847.1" fill="none" stroke="#0d0d0c" stroke-width="1.9"/><path d="M773.8 896.1L773.8 891.7L781.6 886.8Q790.5 880.6 797.0 872.4L802.8 866.2" fill="none" stroke="#0d0d0c" stroke-width="1.9"/><path d="M799.8 915.6L799.8 911.2L807.6 906.4Q816.1 900.5 822.2 892.6L828.7 885.4" fill="none" stroke="#0d0d0c" stroke-width="1.9"/><path d="M825.8 935.1L825.8 930.7L833.6 926.0Q841.7 920.4 847.4 912.9L854.5 904.5" fill="none" stroke="#0d0d0c" stroke-width="1.9"/><path d="M704.4 828.8L860.6 946.2" fill="none" stroke="#0d0d0c" stroke-width="1.8" stroke-linejoin="round" stroke-linecap="round" /><path d="M696.2 838.1L696.2 833.8L703.8 828.8L706.2 829.4L723.8 813.8L728.1 811.0L894.4 932.5L895.0 948.1L870.0 968.8L862.5 963.8L852.5 955.0Z" fill="none" stroke="#1d1c1a" stroke-width="1" stroke-linejoin="round" /><g transform="translate(3,24)" filter="url(#bl5)" opacity=".27"><path d="M558.0 933.5L560.9 928.4L641.8 869.2L650.2 875.4L654.9 882.5L654.9 890.1L642.2 898.7L638.5 894.7L591.4 938.5L751.9 1068.5L823.7 1010.4L832.9 1017.6L833.7 1033.5L752.7 1100.2L748.5 1101.9L744.4 1101.1L561.4 950.2Z" fill="#000" /></g><path d="M558.0 933.5L560.9 928.4L641.8 869.2L650.2 875.4L654.9 882.5L654.9 890.1L642.2 898.7L638.5 894.7L591.4 938.5L751.9 1068.5L823.7 1010.4L832.9 1017.6L833.7 1033.5L752.7 1100.2L748.5 1101.9L744.4 1101.1L561.4 950.2Z" fill="#66635c" /><path d="M558.0 932.1L560.9 928.4L641.8 869.2L650.2 875.4L578.7 928.1L751.9 1068.5L823.7 1010.4L832.9 1017.6L751.9 1084.9L742.7 1084.9L559.7 936.5Z" fill="#8a877f" stroke="#1d1c1a" stroke-width="0.8" stroke-linejoin="round" /><path d="M578.7 928.1L650.2 875.4L654.9 882.5L654.9 890.1L642.2 898.7L638.5 894.7L591.4 938.5Z" fill="#5e5b54" stroke="#1d1c1a" stroke-width="0.8" stroke-linejoin="round" /><path d="M637.7 892.6L649.3 883.7L654.9 885.4L642.7 893.7Z" fill="#77746d" stroke="#1d1c1a" stroke-width="0.7" stroke-linejoin="round" /><path d="M637.7 892.6L642.7 893.7L642.2 898.7L637.7 896.4Z" fill="#6b6861" stroke="#1d1c1a" stroke-width="0.7" stroke-linejoin="round" /><path d="M559.7 936.5L742.7 1084.9L744.4 1101.1L561.4 950.2L558.0 933.5Z" fill="#6d6a63" stroke="#1d1c1a" stroke-width="0.8" stroke-linejoin="round" /><path d="M742.7 1084.9L751.9 1084.9L752.7 1100.2L748.5 1101.9L744.4 1101.1Z" fill="#7d7a73" stroke="#1d1c1a" stroke-width="0.8" stroke-linejoin="round" /><path d="M751.9 1084.9L832.9 1017.6L833.7 1033.5L752.7 1100.2Z" fill="#66635c" stroke="#1d1c1a" stroke-width="0.8" stroke-linejoin="round" /><path d="M806.1 1024.3L818.7 1012.6L821.2 1014.8L808.3 1025.9Z" fill="#4d4a45" stroke="#1d1c1a" stroke-width="0.6" stroke-linejoin="round" /><path d="M558.0 933.5L560.9 928.4L641.8 869.2L650.2 875.4L654.9 882.5L654.9 890.1L642.2 898.7L638.5 894.7L591.4 938.5L751.9 1068.5L823.7 1010.4L832.9 1017.6L833.7 1033.5L752.7 1100.2L748.5 1101.9L744.4 1101.1L561.4 950.2Z" fill="none" stroke="#1d1c1a" stroke-width="1" stroke-linejoin="round" /><ellipse cx="997.5" cy="250.0" rx="14" ry="5" fill="#000" opacity=".12" filter="url(#bl3)"/><path d="M981.9 203.4L985.0 197.5L990.0 194.7L1002.5 201.2L1003.8 198.8L1007.5 197.8L1011.2 200.0L1011.6 210.0L1014.1 211.2L1014.1 216.9L1005.9 222.8L981.9 210.0Z" fill="#3d3b37" stroke="#1d1c1a" stroke-width="1" stroke-linejoin="round" /><path d="M985.9 198.8L990.0 195.6L1001.6 201.9L997.5 204.7Z" fill="#55524c" /><path d="M1004.1 200.3L1007.5 198.8L1010.6 200.6L1006.6 202.8Z" fill="#55524c" /><path d="M982.5 204.1L1005.9 216.9L1013.8 211.9L1011.6 210.3L1006.2 213.8L986.2 203.8Z" fill="#4d4a45" /><path d="M1019.4 214.7L1021.9 213.1L1024.7 215.0L1024.4 226.6L1021.9 228.1L1019.4 226.6Z" fill="#8c8a84" stroke="#1d1c1a" stroke-width="0.9" stroke-linejoin="round" /></g></svg>
<svg width="0" height="0" style="left:0;top:0"><defs>
<linearGradient id="gb" x1="0" y1="0" x2="1" y2="0"><stop offset="0" stop-color="#fff"/><stop offset=".45" stop-color="#f4f5f8"/><stop offset="1" stop-color="#b9bcc6"/></linearGradient>
<linearGradient id="gt" x1="0" y1="0" x2="1" y2="1"><stop offset="0" stop-color="#bbb"/><stop offset="1" stop-color="#333"/></linearGradient>
<symbol id="eye" viewBox="0 0 16 10"><path d="M0 5C2.500 1.500 5 0 8 0S13.500 1.500 16 5C13.500 8.500 11 10 8 10S2.500 8.500 0 5Z" fill="#9c9c9c"/><circle cx="8" cy="4.900" r="3.200" fill="#f1f1f1"/><circle cx="8" cy="4.900" r="1.900" fill="#9c9c9c"/></symbol>
<symbol id="eyo" viewBox="0 0 16 12"><path d="M0.500 6C3 2.600 5.500 1.400 8 1.400S13 2.600 15.500 6C13 9.400 10.500 10.600 8 10.600S3 9.400 0.500 6Z" fill="none" stroke="#a8a8a8" stroke-width="1"/><circle cx="8" cy="6" r="2.600" fill="none" stroke="#a8a8a8" stroke-width="1"/><path d="M2.500 0.800L13.500 11.200" stroke="#999" stroke-width="1.100"/></symbol>
<symbol id="fol" viewBox="0 0 16 13"><path d="M0 0.300H6.400L5.200 1.500H0Z" fill="#999"/><path d="M0 2.300H5.600L7.200 0.900H16V12.800H0Z" fill="#999"/></symbol>
<symbol id="bod" viewBox="0 0 16 17"><path d="M1 3.500C1 1.800 2.300 0.700 4 0.700H12C13.700 0.700 15 1.800 15 3.500V13.500C15 15.200 13.700 16.300 12 16.300H4C2.300 16.300 1 15.200 1 13.500Z" fill="url(#gb)" stroke="#3c3c3c" stroke-width="1.100"/><path d="M1.300 3.800C4 5.200 12 5.200 14.700 3.800" fill="none" stroke="#fff" stroke-width=".8" opacity=".9"/></symbol>
<symbol id="ext" viewBox="0 0 18 17"><path d="M0.500 14L3 11.500H13L10.500 14.500V16.500H0.500Z" fill="#cfcfcf"/><path d="M0.500 3.500L3.500 0.500H13.500L10.500 3.500Z" fill="#8fcbf6"/><path d="M0.500 3.500H10.500V14H0.500Z" fill="#6fb3e6"/><path d="M10.500 3.500L13.500 0.500V11L10.500 14Z" fill="#4792cf"/><path d="M16 13.500V2.500" stroke="#222" stroke-width="1"/><path d="M14.600 3.800L16 0.600L17.400 3.800Z" fill="#222"/></symbol>
<symbol id="fil" viewBox="0 0 17 17"><path d="M0.600 4.500L4 0.600H8.500C13 0.600 16.400 4.400 16.400 8.500V13L13 16.400H0.600Z" fill="#dcdcdc" stroke="#555" stroke-width="1"/><path d="M6.500 3.600L9.200 0.700C13.300 1 16.300 4.600 16.300 8.500L13 11C13 7 10.200 4 6.500 3.600Z" fill="#6fb3e6"/><path d="M13 11L16.300 8.500V13L13 16.300Z" fill="#bdbdbd"/></symbol>
<symbol id="cha" viewBox="0 0 17 17"><path d="M0.600 9L8 0.600H13L16.400 4V16.400H0.600Z" fill="#e4e4e4" stroke="#555" stroke-width="1"/><path d="M1.200 8.800L8.200 1L11.500 4.200L4.600 11.800Z" fill="#6fb3e6"/></symbol>
<symbol id="dra" viewBox="0 0 17 17"><path d="M0.600 16.400V6.500L4 0.800H10.500L13.500 16.400Z" fill="#e4e4e4" stroke="#555" stroke-width="1"/><path d="M6.200 3.500L10.600 0.900L14.500 13L10 15.800Z" fill="#4e9bdc"/><path d="M12 0.600L16.400 12" stroke="#333" stroke-width="1"/></symbol>
<symbol id="trc" viewBox="0 0 10 13"><path d="M1 0.800L8.800 6.500L1 12.200Z" fill="#e6e8ed" stroke="#222" stroke-width="1.250" stroke-linejoin="round"/></symbol>
<symbol id="tre" viewBox="0 0 12 12"><path d="M11.500 0.500V11.500H0.500Z" fill="url(#gt)" stroke="#333" stroke-width=".9" stroke-linejoin="round"/></symbol>
<symbol id="gear" viewBox="0 0 16 16"><path d="M6.700 0H9.300L9.700 2.200L11.300 2.900L13.200 1.600L15 3.400L13.700 5.300L14.400 6.900L16 7.200V9.400L14.400 9.800L13.700 11.400L15 13.200L13.200 15L11.300 13.700L9.700 14.400L9.300 16H6.700L6.300 14.400L4.700 13.700L2.800 15L1 13.200L2.300 11.400L1.600 9.800L0 9.400V7.200L1.600 6.900L2.300 5.300L1 3.400L2.800 1.600L4.700 2.900L6.300 2.200Z" fill="#999"/><circle cx="8" cy="8.200" r="2.700" fill="#f1f1f1"/></symbol>
</defs></svg><div class="a" style="left:12px;top:144.500px;width:298.500px;height:22.500px;background:#f2f2f2;border:1px solid #cbcbcb;box-sizing:content-box"></div><svg style="left:17px;top:153.5px" width="11" height="7" viewBox="0 0 11 7"><path d="M5 0V7L0 3.500ZM10.500 0V7L5.500 3.500Z" fill="#333"/></svg><span id="t1" class="t" style="left:37px;top:149.7px;font-size:11px;line-height:17px;color:#666;font-weight:400;transform:scaleX(0.7500);">ブラウザ</span><svg style="left:291px;top:151.5px" width="10" height="10" viewBox="0 0 10 10"><circle cx="5" cy="5" r="5" fill="#222"/><rect x="2" y="4.100" width="6" height="1.800" fill="#fff"/></svg><div class="a" style="left:16.200px;top:174.500px;width:5.300px;height:227px;background:#9b9b9b;border-radius:2.600px 2.600px 2px 2px"></div><div class="a" style="left:16.200px;top:400px;width:5.300px;height:708px;background:#c9c9cb"></div><div class="rb" style="left:48px;top:174.500px;width:187.500px;height:19.300px"></div><svg style="left:28.5px;top:178px" width="11.5" height="11.5"><use href="#tre"/></svg><svg style="left:51px;top:179.3px" width="16" height="9.4"><use href="#eye"/></svg><div class="a" style="left:73px;top:176px;width:138px;height:15.600px;background:#9a9a9a"></div><svg style="left:76px;top:176.5px" width="16" height="15" viewBox="0 0 16 15"><path d="M1 4L4 1H15V11L12 14.300H1Z" fill="#f7f8fb" stroke="#333" stroke-width="1"/><path d="M1.500 4.200H11.800V14" fill="none" stroke="#b8bcc6" stroke-width=".8"/><path d="M11.800 4.200L15 1V11L11.800 14.300Z" fill="#c5c8d2"/><path d="M1 4L4 1H15V11L12 14.300H1Z" fill="none" stroke="#333" stroke-width="1"/></svg><span id="t2" class="t" style="left:106px;top:176.75px;font-size:11.3px;line-height:17.3px;color:#fff;font-weight:700;transform:scaleX(0.9639);">MR-11DR_open v2</span><svg style="left:214.5px;top:177.5px" width="14" height="14" viewBox="0 0 14 14"><circle cx="7" cy="7" r="6.200" fill="#fff" stroke="#222" stroke-width="1.200"/><circle cx="7" cy="7" r="2.400" fill="#222"/></svg><div class="rb" style="left:66px;top:198px;width:121.5px"></div><svg style="left:47.5px;top:201.5px" width="10" height="13"><use href="#trc"/></svg><svg style="left:69px;top:200px" width="16" height="16"><use href="#gear"/></svg><span id="t3" class="t" style="left:99px;top:201.2px;font-size:11px;line-height:17px;color:#333;font-weight:400;transform:scaleX(0.7778);">ドキュメントの設定</span><div class="rb" style="left:66px;top:222px;width:125.5px"></div><svg style="left:47.5px;top:225.5px" width="10" height="13"><use href="#trc"/></svg><svg style="left:69px;top:225.5px" width="16" height="13"><use href="#fol"/></svg><span id="t4" class="t" style="left:99px;top:225.2px;font-size:11px;line-height:17px;color:#333;font-weight:400;transform:scaleX(0.8283);">名前の付いたビュー</span><div class="rb" style="left:66px;top:246px;width:91px"></div><svg style="left:47.5px;top:249.5px" width="10" height="13"><use href="#trc"/></svg><svg style="left:69px;top:250px" width="16" height="12"><use href="#eyo"/></svg><svg style="left:94px;top:249.5px" width="16" height="13"><use href="#fol"/></svg><span id="t5" class="t" style="left:124px;top:249.2px;font-size:11px;line-height:17px;color:#333;font-weight:400;transform:scaleX(0.9545);">原点</span><div class="rb" style="left:66px;top:270px;width:94px"></div><svg style="left:47.5px;top:273.7px" width="11.5" height="11.5"><use href="#tre"/></svg><svg style="left:69px;top:275.3px" width="16" height="9.4"><use href="#eye"/></svg><svg style="left:94px;top:273.5px" width="16" height="13"><use href="#fol"/></svg><span id="t6" class="t" style="left:124px;top:273.2px;font-size:11px;line-height:17px;color:#333;font-weight:400;transform:scaleX(0.7445);">ボディ</span><div class="rb" style="left:84px;top:294px;width:123px"></div><svg style="left:65.5px;top:297.5px" width="10" height="13"><use href="#trc"/></svg><svg style="left:87px;top:298px" width="16" height="12"><use href="#eyo"/></svg><svg style="left:112px;top:297.5px" width="16" height="13"><use href="#fol"/></svg><span id="t7" class="t" style="left:142px;top:297.2px;font-size:11px;line-height:17px;color:#333;font-weight:400;transform:scaleX(0.8489);">グループ3 (4)</span><div class="rb" style="left:84px;top:318px;width:143px"></div><svg style="left:87px;top:323.3px" width="16" height="9.4"><use href="#eye"/></svg><svg style="left:112px;top:319.5px" width="16" height="17"><use href="#bod"/></svg><span id="t8" class="t" style="left:142px;top:321.2px;font-size:11px;line-height:17px;color:#333;font-weight:400;transform:scaleX(0.8750);">カセット蓋 (1) (1)</span><div class="rb" style="left:84px;top:342px;width:163px"></div><svg style="left:87px;top:347.3px" width="16" height="9.4"><use href="#eye"/></svg><svg style="left:112px;top:343.5px" width="16" height="17"><use href="#bod"/></svg><span id="t9" class="t" style="left:142px;top:345.2px;font-size:11px;line-height:17px;color:#333;font-weight:400;transform:scaleX(0.8995);">カセット蓋 (1) (1) (1)</span><div class="rb" style="left:84px;top:366px;width:103px"></div><svg style="left:87px;top:371.3px" width="16" height="9.4"><use href="#eye"/></svg><svg style="left:112px;top:367.5px" width="16" height="17"><use href="#bod"/></svg><span id="t10" class="t" style="left:142px;top:369.2px;font-size:11px;line-height:17px;color:#333;font-weight:400;transform:scaleX(0.7727);">ハンドル</span><div class="rb" style="left:84px;top:390px;width:107px"></div><svg style="left:87px;top:395.3px" width="16" height="9.4"><use href="#eye"/></svg><svg style="left:112px;top:391.5px" width="16" height="17"><use href="#bod"/></svg><span id="t11" class="t" style="left:142px;top:393.2px;font-size:11px;line-height:17px;color:#333;font-weight:400;transform:scaleX(0.8636);">つまみ類</span><div class="rb" style="left:84px;top:414px;width:99px"></div><svg style="left:87px;top:419.3px" width="16" height="9.4"><use href="#eye"/></svg><svg style="left:112px;top:415.5px" width="16" height="17"><use href="#bod"/></svg><span id="t12" class="t" style="left:142px;top:417.2px;font-size:11px;line-height:17px;color:#333;font-weight:400;transform:scaleX(0.7273);">カウンタ</span><div class="rb" style="left:84px;top:438px;width:87px"></div><svg style="left:87px;top:443.3px" width="16" height="9.4"><use href="#eye"/></svg><svg style="left:112px;top:439.5px" width="16" height="17"><use href="#bod"/></svg><span id="t13" class="t" style="left:142px;top:441.2px;font-size:11px;line-height:17px;color:#333;font-weight:400;transform:scaleX(0.8876);">LED</span><div class="rb" style="left:84px;top:462px;width:139px"></div><svg style="left:87px;top:467.3px" width="16" height="9.4"><use href="#eye"/></svg><svg style="left:112px;top:463.5px" width="16" height="17"><use href="#bod"/></svg><span id="t14" class="t" style="left:142px;top:465.2px;font-size:11px;line-height:17px;color:#333;font-weight:400;transform:scaleX(0.8564);">ボディ・底面 (1)</span><div class="rb" style="left:84px;top:486px;width:95px"></div><svg style="left:87px;top:491.3px" width="16" height="9.4"><use href="#eye"/></svg><svg style="left:112px;top:487.5px" width="16" height="17"><use href="#bod"/></svg><span id="t15" class="t" style="left:142px;top:489.2px;font-size:11px;line-height:17px;color:#333;font-weight:400;transform:scaleX(0.7576);">ボタン</span><div class="rb" style="left:84px;top:510px;width:155px"></div><svg style="left:87px;top:515.3px" width="16" height="9.4"><use href="#eye"/></svg><svg style="left:112px;top:511.5px" width="16" height="17"><use href="#bod"/></svg><span id="t16" class="t" style="left:142px;top:513.2px;font-size:11px;line-height:17px;color:#333;font-weight:400;transform:scaleX(0.8856);">ボディ・上面 (1) (1)</span><div class="rb" style="left:84px;top:534px;width:155px"></div><svg style="left:87px;top:539.3px" width="16" height="9.4"><use href="#eye"/></svg><svg style="left:112px;top:535.5px" width="16" height="17"><use href="#bod"/></svg><span id="t17" class="t" style="left:142px;top:537.2px;font-size:11px;line-height:17px;color:#333;font-weight:400;transform:scaleX(0.8856);">ボディ・上面 (1) (2)</span><div class="rb" style="left:84px;top:558px;width:119px"></div><svg style="left:87px;top:563.3px" width="16" height="9.4"><use href="#eye"/></svg><svg style="left:112px;top:559.5px" width="16" height="17"><use href="#bod"/></svg><span id="t18" class="t" style="left:142px;top:561.2px;font-size:11px;line-height:17px;color:#333;font-weight:400;transform:scaleX(0.7499);">テープ押さえ</span><div class="rb" style="left:66px;top:582px;width:111px"></div><svg style="left:47.5px;top:585.5px" width="10" height="13"><use href="#trc"/></svg><svg style="left:69px;top:587.3px" width="16" height="9.4"><use href="#eye"/></svg><svg style="left:94px;top:585.5px" width="16" height="13"><use href="#fol"/></svg><span id="t19" class="t" style="left:124px;top:585.2px;font-size:11px;line-height:17px;color:#333;font-weight:400;transform:scaleX(0.7455);">キャンバス</span><div class="rb" style="left:66px;top:606px;width:139px"></div><svg style="left:47.5px;top:609.5px" width="10" height="13"><use href="#trc"/></svg><svg style="left:69px;top:611.3px" width="16" height="9.4"><use href="#eye"/></svg><svg style="left:94px;top:609.5px" width="16" height="13"><use href="#fol"/></svg><span id="t20" class="t" style="left:124px;top:609.2px;font-size:11px;line-height:17px;color:#333;font-weight:400;transform:scaleX(0.7289);">コンストラクション</span><div class="rb" style="left:66px;top:630px;width:106px"></div><svg style="left:69px;top:631px" width="18" height="17"><use href="#ext"/></svg><span id="t21" class="t" style="left:99px;top:633.2px;font-size:11px;line-height:17px;color:#333;font-weight:400;transform:scaleX(0.9053);">押し出し1388</span><div class="rb" style="left:66px;top:654px;width:106px"></div><svg style="left:69px;top:655px" width="18" height="17"><use href="#ext"/></svg><span id="t22" class="t" style="left:99px;top:657.2px;font-size:11px;line-height:17px;color:#333;font-weight:400;transform:scaleX(0.9053);">押し出し1423</span><div class="rb" style="left:66px;top:678px;width:106px"></div><svg style="left:69px;top:679px" width="18" height="17"><use href="#ext"/></svg><span id="t23" class="t" style="left:99px;top:681.2px;font-size:11px;line-height:17px;color:#333;font-weight:400;transform:scaleX(0.9053);">押し出し1452</span><div class="rb" style="left:66px;top:702px;width:106px"></div><svg style="left:69px;top:703.5px" width="16" height="16"><use href="#fil"/></svg><span id="t24" class="t" style="left:99px;top:705.2px;font-size:11px;line-height:17px;color:#333;font-weight:400;transform:scaleX(0.7822);">フィレット1652</span><div class="rb" style="left:66px;top:726px;width:106px"></div><svg style="left:69px;top:727px" width="18" height="17"><use href="#ext"/></svg><span id="t25" class="t" style="left:99px;top:729.2px;font-size:11px;line-height:17px;color:#333;font-weight:400;transform:scaleX(0.9053);">押し出し1653</span><div class="rb" style="left:66px;top:750px;width:106px"></div><svg style="left:69px;top:751px" width="18" height="17"><use href="#ext"/></svg><span id="t26" class="t" style="left:99px;top:753.2px;font-size:11px;line-height:17px;color:#333;font-weight:400;transform:scaleX(0.9053);">押し出し1657</span><div class="rb" style="left:66px;top:774px;width:106px"></div><svg style="left:69px;top:775.5px" width="16" height="16"><use href="#fil"/></svg><span id="t27" class="t" style="left:99px;top:777.2px;font-size:11px;line-height:17px;color:#333;font-weight:400;transform:scaleX(0.7822);">フィレット1659</span><div class="rb" style="left:66px;top:798px;width:106px"></div><svg style="left:69px;top:799.5px" width="16" height="16"><use href="#fil"/></svg><span id="t28" class="t" style="left:99px;top:801.2px;font-size:11px;line-height:17px;color:#333;font-weight:400;transform:scaleX(0.7822);">フィレット1747</span><div class="rb" style="left:66px;top:822px;width:106px"></div><svg style="left:69px;top:823px" width="18" height="17"><use href="#ext"/></svg><span id="t29" class="t" style="left:99px;top:825.2px;font-size:11px;line-height:17px;color:#333;font-weight:400;transform:scaleX(0.9053);">押し出し1764</span><div class="rb" style="left:66px;top:846px;width:98px"></div><svg style="left:69px;top:847.5px" width="16" height="16"><use href="#cha"/></svg><span id="t30" class="t" style="left:99px;top:849.2px;font-size:11px;line-height:17px;color:#333;font-weight:400;transform:scaleX(0.9394);">面取り1765</span><div class="rb" style="left:66px;top:870px;width:90px"></div><svg style="left:69px;top:871.5px" width="16" height="16"><use href="#dra"/></svg><span id="t31" class="t" style="left:99px;top:873.2px;font-size:11px;line-height:17px;color:#333;font-weight:400;transform:scaleX(0.9896);">勾配1766</span><div class="rb" style="left:66px;top:894px;width:106px"></div><svg style="left:69px;top:895px" width="18" height="17"><use href="#ext"/></svg><span id="t32" class="t" style="left:99px;top:897.2px;font-size:11px;line-height:17px;color:#333;font-weight:400;transform:scaleX(0.9053);">押し出し1767</span><div class="rb" style="left:66px;top:918px;width:106px"></div><svg style="left:69px;top:919px" width="18" height="17"><use href="#ext"/></svg><span id="t33" class="t" style="left:99px;top:921.2px;font-size:11px;line-height:17px;color:#333;font-weight:400;transform:scaleX(0.9053);">押し出し1812</span><div class="rb" style="left:66px;top:942px;width:106px"></div><svg style="left:69px;top:943px" width="18" height="17"><use href="#ext"/></svg><span id="t34" class="t" style="left:99px;top:945.2px;font-size:11px;line-height:17px;color:#333;font-weight:400;transform:scaleX(0.9053);">押し出し1814</span><div class="rb" style="left:66px;top:966px;width:106px"></div><svg style="left:69px;top:967px" width="18" height="17"><use href="#ext"/></svg><span id="t35" class="t" style="left:99px;top:969.2px;font-size:11px;line-height:17px;color:#333;font-weight:400;transform:scaleX(0.9053);">押し出し1815</span><div class="rb" style="left:66px;top:990px;width:106px"></div><svg style="left:69px;top:991px" width="18" height="17"><use href="#ext"/></svg><span id="t36" class="t" style="left:99px;top:993.2px;font-size:11px;line-height:17px;color:#333;font-weight:400;transform:scaleX(0.9053);">押し出し1816</span><div class="rb" style="left:66px;top:1014px;width:106px"></div><svg style="left:69px;top:1015px" width="18" height="17"><use href="#ext"/></svg><span id="t37" class="t" style="left:99px;top:1017.2px;font-size:11px;line-height:17px;color:#333;font-weight:400;transform:scaleX(0.9053);">押し出し1817</span><div class="rb" style="left:66px;top:1038px;width:106px"></div><svg style="left:69px;top:1039.5px" width="16" height="16"><use href="#fil"/></svg><span id="t38" class="t" style="left:99px;top:1041.2px;font-size:11px;line-height:17px;color:#333;font-weight:400;transform:scaleX(0.7822);">フィレット1818</span><div class="rb" style="left:66px;top:1062px;width:106px"></div><svg style="left:69px;top:1063px" width="18" height="17"><use href="#ext"/></svg><span id="t39" class="t" style="left:99px;top:1065.2px;font-size:11px;line-height:17px;color:#333;font-weight:400;transform:scaleX(0.9053);">押し出し1820</span><div class="rb" style="left:66px;top:1086px;width:102px"></div><svg style="left:69px;top:1087px" width="18" height="17"><use href="#ext"/></svg><span id="t40" class="t" style="left:99px;top:1089.2px;font-size:11px;line-height:17px;color:#333;font-weight:400;transform:scaleX(0.8907);">押し出し1821</span><div class="a" style="left:12px;top:1131px;width:298.500px;height:23.500px;background:#f2f2f2;border:1px solid #cbcbcb"></div><span id="t41" class="t" style="left:37px;top:1136.2px;font-size:11px;line-height:17px;color:#666;font-weight:400;transform:scaleX(0.7045);">コメント</span><svg style="left:291px;top:1138px" width="10" height="10" viewBox="0 0 10 10"><circle cx="5" cy="5" r="5" fill="#222"/><path d="M2 5H8M5 2V8" stroke="#fff" stroke-width="1.500"/></svg>
<div class="a" style="left:0;top:0;width:8px;height:33px;background:#e9e9ee"></div><div class="a" style="left:0;top:33px;width:8px;height:43px;background:#fff"></div><div class="a" style="left:0;top:76px;width:8px;height:964px;background:#f0f0f0"></div><div class="a" style="left:0;top:172px;width:6px;height:17px;background:#c4c4c4"></div><svg style="left:0px;top:84px" width="5" height="4" viewBox="0 0 5 4"><path d="M0 4L2 0.5L4.5 4Z" fill="#444"/></svg><svg style="left:0px;top:1026px" width="5" height="4" viewBox="0 0 5 4"><path d="M0 0.5H4.5L2 4Z" fill="#444"/></svg><div class="a" style="left:0;top:1040px;width:8px;height:40px;background:#141414"></div><div class="a" style="left:0;top:1080px;width:8px;height:88px;background:#000"></div><div class="a" style="left:0;top:1160px;width:1928px;height:8px;background:#0c0c0c"></div><div class="a" style="left:8px;top:1160px;width:1918px;height:1px;background:#b5b5b5"></div><div class="a" style="left:56px;top:1161px;width:288px;height:7px;background:#ededed"></div><div class="a" style="left:591px;top:1161px;width:48px;height:7px;background:#a5561d"></div><div class="a" style="left:836px;top:1161px;width:48px;height:7px;background:#3a3a3a"></div><div class="a" style="left:8px;top:0;width:1920px;height:23px;background:#fff"></div><svg style="left:11px;top:3px" width="14" height="16" viewBox="0 0 14 16"><rect x="0" y="0" width="14" height="16" rx="2.2" fill="#ff6d0a"/><path d="M0 11H14V13.8A2.2 2.2 0 0 1 11.8 16H2.2A2.2 2.2 0 0 1 0 13.8Z" fill="#a4400a"/><path d="M5 2.6H9.6V4H6.6V5.8H9.2V7.2H6.6V9.8H5Z" fill="#fff"/><rect x="4" y="12.6" width="6" height="1.6" fill="#f0b58c"/></svg><span id="t42" class="t" style="left:31px;top:3.45px;font-size:12.5px;line-height:18.5px;color:#000;font-weight:400;transform:scaleX(0.9373);">Autodesk Fusion 360 (個人用 - 商用利用不可)</span><svg style="left:1807px;top:10px" width="10" height="1" viewBox="0 0 10 1"><rect width="10" height="1" fill="#111"/></svg><svg style="left:1852px;top:5px" width="10" height="10" viewBox="0 0 10 10"><path d="M0.5 2.5H7.5V9.5H0.5ZM2.5 2.5V0.5H9.5V7.5H7.5" fill="none" stroke="#111" stroke-width="1"/></svg><svg style="left:1898px;top:5px" width="10" height="10" viewBox="0 0 10 10"><path d="M0 0L10 10M10 0L0 10" stroke="#111" stroke-width="1.1"/></svg><div class="a" style="left:8px;top:23px;width:1918px;height:32px;background:#cdcdcd"></div><div class="a" style="left:1926px;top:23px;width:2px;height:1137px;background:#fff"></div><svg style="left:17px;top:32px" width="14" height="14" viewBox="0 0 14 14"><rect x="0" y="0" width="3.6" height="3.6" rx=".6" fill="#5c5c5c"/><rect x="0" y="5.1" width="3.6" height="3.6" rx=".6" fill="#5c5c5c"/><rect x="0" y="10.2" width="3.6" height="3.6" rx=".6" fill="#5c5c5c"/><rect x="5.1" y="0" width="3.6" height="3.6" rx=".6" fill="#5c5c5c"/><rect x="5.1" y="5.1" width="3.6" height="3.6" rx=".6" fill="#5c5c5c"/><rect x="5.1" y="10.2" width="3.6" height="3.6" rx=".6" fill="#5c5c5c"/><rect x="10.2" y="0" width="3.6" height="3.6" rx=".6" fill="#5c5c5c"/><rect x="10.2" y="5.1" width="3.6" height="3.6" rx=".6" fill="#5c5c5c"/><rect x="10.2" y="10.2" width="3.6" height="3.6" rx=".6" fill="#5c5c5c"/></svg><svg style="left:50px;top:31px" width="13" height="16" viewBox="0 0 13 16"><path d="M0.5 0H8L13 5V15.5H0.5Z" fill="#5c5c5c"/><path d="M8.6 0V4.4H13Z" fill="#cdcdcd"/><path d="M9.4 0.6L12.4 3.6H9.4Z" fill="#5c5c5c"/></svg><svg style="left:69px;top:36.5px" width="7" height="4.5" viewBox="0 0 7 4.5"><path d="M0 0H7 L3.5 4.5Z" fill="#5c5c5c"/></svg><svg style="left:95px;top:32px" width="14" height="14" viewBox="0 0 14 14"><path d="M1 0H13A1 1 0 0 1 14 1V14H2.5L0 11.5V1A1 1 0 0 1 1 0Z" fill="#8e8e8e"/><rect x="3.2" y="0" width="7.6" height="5" fill="#cdcdcd"/><rect x="4" y="8.6" width="6.2" height="5.4" fill="#cdcdcd"/><rect x="5.3" y="10.2" width="3.4" height="3.8" fill="#8e8e8e"/></svg><svg style="left:128px;top:33px" width="14" height="13" viewBox="0 0 14 13"><path d="M6 1L1.5 5.5L6 10M1.8 5.5H8.5A4.3 4.3 0 0 1 12.8 9.8V12.5" fill="none" stroke="#5c5c5c" stroke-width="1.9"/></svg><svg style="left:148px;top:36.5px" width="7" height="4.5" viewBox="0 0 7 4.5"><path d="M0 0H7 L3.5 4.5Z" fill="#5c5c5c"/></svg><svg style="left:168px;top:33px" width="14" height="13" viewBox="0 0 14 13"><path d="M8 1L12.5 5.5L8 10M12.2 5.5H5.5A4.3 4.3 0 0 0 1.2 9.8V12.5" fill="none" stroke="#999" stroke-width="1.9"/></svg><svg style="left:187px;top:36.5px" width="7" height="4.5" viewBox="0 0 7 4.5"><path d="M0 0H7 L3.5 4.5Z" fill="#999"/></svg><div class="a" style="left:202px;top:27px;width:480.5px;height:28px;background:#bebebe;border-radius:5px 5px 0 0"></div><div class="a" style="left:687px;top:27px;width:480.5px;height:28px;background:#bebebe;border-radius:5px 5px 0 0"></div><div class="a" style="left:1172px;top:27px;width:481px;height:28px;background:#f2f2f2;border-radius:5px 5px 0 0"></div><div class="a" style="left:1657px;top:27px;width:28px;height:28px;background:#bebebe;border-radius:4px 4px 0 0"></div><svg style="left:399px;top:34px" width="14" height="16" viewBox="0 0 14 16"><path d="M7 0.5L13.5 3.8V12L7 15.5L0.5 12V3.8Z" fill="#f5861f"/><path d="M7 0.5L13.5 3.8L7 7.2L0.5 3.8Z" fill="#ffc48a"/><path d="M7 7.2L13.5 3.8V12L7 15.5Z" fill="#e8660c"/><path d="M7 0.5L13.5 3.8V12L7 15.5L0.5 12V3.8Z" fill="none" stroke="#d25a08" stroke-width=".7"/></svg><span id="t43" class="t" style="left:417px;top:32.8px;font-size:12px;line-height:18px;color:#5a5a5a;font-weight:400;transform:scaleX(0.9662);">freezer v31</span><svg style="left:667.5px;top:37px" width="9" height="9" viewBox="0 0 9 9"><path d="M0.5 0.5L8.5 8.5M8.5 0.5L0.5 8.5" stroke="#6a6a6a" stroke-width="1.3" fill="none"/></svg><svg style="left:876px;top:34px" width="14" height="16" viewBox="0 0 14 16"><path d="M7 0.5L13.5 3.8V12L7 15.5L0.5 12V3.8Z" fill="#f5861f"/><path d="M7 0.5L13.5 3.8L7 7.2L0.5 3.8Z" fill="#ffc48a"/><path d="M7 7.2L13.5 3.8V12L7 15.5Z" fill="#e8660c"/><path d="M7 0.5L13.5 3.8V12L7 15.5L0.5 12V3.8Z" fill="none" stroke="#d25a08" stroke-width=".7"/></svg><span id="t44" class="t" style="left:894px;top:32.8px;font-size:12px;line-height:18px;color:#5a5a5a;font-weight:400;transform:scaleX(0.9904);">color_box v16</span><svg style="left:1152.5px;top:37px" width="9" height="9" viewBox="0 0 9 9"><path d="M0.5 0.5L8.5 8.5M8.5 0.5L0.5 8.5" stroke="#6a6a6a" stroke-width="1.3" fill="none"/></svg><svg style="left:1345.5px;top:34px" width="14" height="16" viewBox="0 0 14 16"><path d="M7 0.5L13.5 3.8V12L7 15.5L0.5 12V3.8Z" fill="#f5861f"/><path d="M7 0.5L13.5 3.8L7 7.2L0.5 3.8Z" fill="#ffc48a"/><path d="M7 7.2L13.5 3.8V12L7 15.5Z" fill="#e8660c"/><path d="M7 0.5L13.5 3.8V12L7 15.5L0.5 12V3.8Z" fill="none" stroke="#d25a08" stroke-width=".7"/></svg><span id="t45" class="t" style="left:1365.5px;top:32.8px;font-size:12px;line-height:18px;color:#333;font-weight:400;transform:scaleX(1.0017);">MR-11DR_open v2</span><svg style="left:1637px;top:37px" width="9" height="9" viewBox="0 0 9 9"><path d="M0.5 0.5L8.5 8.5M8.5 0.5L0.5 8.5" stroke="#555" stroke-width="1.3" fill="none"/></svg><svg style="left:1664.5px;top:33.5px" width="13" height="13" viewBox="0 0 13 13"><path d="M6.5 0V13M0 6.5H13" stroke="#6a6a6a" stroke-width="2.2"/></svg><svg style="left:1697px;top:30px" width="15" height="17" viewBox="0 0 15 17"><path d="M0.5 0.5H8L11 3.5V7L5 13.5V16.5H0.5Z" fill="#555"/><path d="M8 0.5V3.5H11Z" fill="#cdcdcd"/><path d="M12.2 6.2L14.3 8.3L8 14.8L5.4 15.6L6 12.8Z" fill="#555" stroke="#cdcdcd" stroke-width=".6"/></svg><span id="t46" class="t" style="left:1716.5px;top:31.3px;font-size:11px;line-height:17px;color:#333;font-weight:400;transform:scaleX(0.9625);">10/10</span><svg style="left:1770px;top:31px" width="16" height="16" viewBox="0 0 16 16"><circle cx="8" cy="8" r="7.2" fill="none" stroke="#555" stroke-width="1.3"/><circle cx="8" cy="8" r="5.2" fill="#555"/><path d="M8 4.4V8.3H11" stroke="#cdcdcd" stroke-width="1.3" fill="none"/></svg><span id="t47" class="t" style="left:1790px;top:31.3px;font-size:11px;line-height:17px;color:#333;font-weight:400;transform:scaleX(0.7347);">1</span><svg style="left:1820px;top:31px" width="14" height="16" viewBox="0 0 14 16"><path d="M7 0.5C7.9 0.5 8.4 1.1 8.4 1.9C10.9 2.6 12 4.7 12 7V10.5L13.6 12.6V13.3H0.4V12.6L2 10.5V7C2 4.7 3.1 2.6 5.6 1.9C5.6 1.1 6.1 0.5 7 0.5Z" fill="#555"/><path d="M5.2 14.2H8.8A1.8 1.8 0 0 1 5.2 14.2Z" fill="#555"/></svg><svg style="left:1852px;top:31px" width="17" height="17" viewBox="0 0 17 17"><circle cx="8.5" cy="8.5" r="8.2" fill="#555"/></svg><span id="t48" class="t" style="left:1856.2px;top:29.9px;font-size:15px;line-height:21px;color:#cdcdcd;font-weight:700;transform:scaleX(0.9376);">?</span><svg style="left:1889px;top:28px" width="24" height="24" viewBox="0 0 24 24"><defs><clipPath id="avc"><circle cx="12" cy="12" r="12"/></clipPath><linearGradient id="avg" x1="0" y1="0" x2="0" y2="1"><stop offset="0" stop-color="#e8eaee"/><stop offset="1" stop-color="#93a6bd"/></linearGradient></defs><circle cx="12" cy="12" r="12" fill="url(#avg)"/><g clip-path="url(#avc)"><ellipse cx="12.3" cy="9.6" rx="5" ry="6.3" fill="#4a5568"/><path d="M1.5 24C2.5 18.5 7 17.8 9.5 16.5V14H15V16.5C17.5 17.8 22 18.5 22.8 24Z" fill="#4a5568"/></g></svg><div class="a" style="left:8px;top:55px;width:1918px;height:81px;background:#f2f2f2"></div><div class="a" style="left:8px;top:136px;width:1918px;height:1px;background:#dadada"></div><div class="a" style="left:8px;top:137px;width:1918px;height:3px;background:#ececec"></div><div class="a" style="left:20px;top:66px;width:108px;height:59px;border:1px solid #dcdcdc;border-radius:5px;background:#f3f3f3"></div><span id="t49" class="t" style="left:52px;top:87.95px;font-size:11.5px;line-height:17.5px;color:#222;font-weight:500;transform:scaleX(0.8043);">デザイン</span><svg style="left:91.5px;top:94px" width="6" height="3.6" viewBox="0 0 6 3.6"><path d="M0 0H6 L3 3.6Z" fill="#333"/></svg><span id="t50" class="t" style="left:158px;top:59.45px;font-size:11.5px;line-height:17.5px;color:#0a8fd6;font-weight:400;transform:scaleX(0.7065);">ソリッド</span><span id="t51" class="t" style="left:236px;top:59.45px;font-size:11.5px;line-height:17.5px;color:#333;font-weight:400;transform:scaleX(0.6953);">サーフェス</span><span id="t52" class="t" style="left:319px;top:59.45px;font-size:11.5px;line-height:17.5px;color:#333;font-weight:400;transform:scaleX(0.6848);">メッシュ</span><span id="t53" class="t" style="left:397px;top:59.45px;font-size:11.5px;line-height:17.5px;color:#333;font-weight:400;transform:scaleX(0.6899);">フォーム</span><span id="t54" class="t" style="left:475px;top:59.45px;font-size:11.5px;line-height:17.5px;color:#333;font-weight:400;transform:scaleX(0.7202);">シート メタル</span><span id="t55" class="t" style="left:573px;top:59.45px;font-size:11.5px;line-height:17.5px;color:#333;font-weight:400;transform:scaleX(0.6833);">プラスチック</span><span id="t56" class="t" style="left:666px;top:59.45px;font-size:11.5px;line-height:17.5px;color:#333;font-weight:400;transform:scaleX(0.6761);">ユーティリティ</span><div class="a" style="left:147px;top:76px;width:55px;height:2.3px;background:#0696d7"></div><div class="a" style="left:358.5px;top:82px;width:1.4px;height:50px;background:#dbdbdb"></div><div class="a" style="left:628px;top:82px;width:1.4px;height:50px;background:#dbdbdb"></div><div class="a" style="left:725px;top:82px;width:1.4px;height:50px;background:#dbdbdb"></div><div class="a" style="left:784px;top:82px;width:1.4px;height:50px;background:#dbdbdb"></div><div class="a" style="left:843px;top:82px;width:1.4px;height:50px;background:#dbdbdb"></div><div class="a" style="left:902px;top:82px;width:1.4px;height:50px;background:#dbdbdb"></div><span id="t57" class="t" style="left:229px;top:119.45px;font-size:11.5px;line-height:17.5px;color:#333;font-weight:400;transform:scaleX(0.9565);">作成</span><svg style="left:254.5px;top:124.3px" width="5.8" height="3.4" viewBox="0 0 5.8 3.4"><path d="M0 0H5.8 L2.9 3.4Z" fill="#333"/></svg><span id="t58" class="t" style="left:476px;top:119.45px;font-size:11.5px;line-height:17.5px;color:#333;font-weight:400;transform:scaleX(0.9565);">修正</span><svg style="left:501.5px;top:124.3px" width="5.8" height="3.4" viewBox="0 0 5.8 3.4"><path d="M0 0H5.8 L2.9 3.4Z" fill="#333"/></svg><span id="t59" class="t" style="left:650px;top:119.45px;font-size:11.5px;line-height:17.5px;color:#333;font-weight:400;transform:scaleX(0.7377);">アセンブリ</span><svg style="left:694.5px;top:124.3px" width="5.8" height="3.4" viewBox="0 0 5.8 3.4"><path d="M0 0H5.8 L2.9 3.4Z" fill="#333"/></svg><span id="t60" class="t" style="left:740px;top:119.45px;font-size:11.5px;line-height:17.5px;color:#333;font-weight:400;transform:scaleX(0.9565);">構築</span><svg style="left:765.5px;top:124.3px" width="5.8" height="3.4" viewBox="0 0 5.8 3.4"><path d="M0 0H5.8 L2.9 3.4Z" fill="#333"/></svg><span id="t61" class="t" style="left:799px;top:119.45px;font-size:11.5px;line-height:17.5px;color:#333;font-weight:400;transform:scaleX(0.9565);">検査</span><svg style="left:823.5px;top:124.3px" width="5.8" height="3.4" viewBox="0 0 5.8 3.4"><path d="M0 0H5.8 L2.9 3.4Z" fill="#333"/></svg><span id="t62" class="t" style="left:858px;top:119.45px;font-size:11.5px;line-height:17.5px;color:#333;font-weight:400;transform:scaleX(0.9565);">挿入</span><svg style="left:882.5px;top:124.3px" width="5.8" height="3.4" viewBox="0 0 5.8 3.4"><path d="M0 0H5.8 L2.9 3.4Z" fill="#333"/></svg><span id="t63" class="t" style="left:917px;top:119.45px;font-size:11.5px;line-height:17.5px;color:#333;font-weight:400;transform:scaleX(0.9565);">選択</span><svg style="left:941px;top:124.3px" width="5.8" height="3.4" viewBox="0 0 5.8 3.4"><path d="M0 0H5.8 L2.9 3.4Z" fill="#333"/></svg><svg style="left:145px;top:82px" width="32" height="32" viewBox="0 0 32 32"><path d="M1.5 1.5H28.5V18M1.5 1.5V28.5H18" fill="none" stroke="#5a5a5a" stroke-width="1" stroke-dasharray="6 1.6"/><rect x="0" y="0" width="3" height="3" fill="#5a5a5a"/><rect x="27" y="0" width="3" height="3" fill="#5a5a5a"/><rect x="0" y="27" width="3" height="3" fill="#5a5a5a"/><path d="M8.5 8.5H22V9.5C22 16 16 21.5 9.5 21.5H8.5Z" fill="none" stroke="#5a5a5a" stroke-width="1" stroke-dasharray="5 1.4"/><rect x="7.2" y="7.2" width="2.6" height="2.6" fill="#5a5a5a"/><rect x="20.6" y="7.2" width="2.6" height="2.6" fill="#5a5a5a"/><rect x="7.2" y="20.2" width="2.6" height="2.6" fill="#5a5a5a"/><path d="M23 18.5H27V23H31.5V27H27V31.5H23V27H18.5V23H23Z" fill="#21a34a"/></svg><svg style="left:189px;top:82px" width="31" height="32" viewBox="0 0 31 32"><path d="M0.5 28.5L5 24H24L19 28.5V31.5H0.5Z" fill="#dcdcdc"/><path d="M19 28.5L24 24V27L19 31.5Z" fill="#bdbdbd"/><path d="M0.5 6L6 0.5H24L19 6Z" fill="#8fcbf6"/><path d="M0.5 6H19V27.5H0.5Z" fill="#6fb3e6"/><path d="M19 6L24 0.5V22.5L19 27.5Z" fill="#4792cf"/><path d="M27.8 26V3" stroke="#222" stroke-width="1.1"/><path d="M25.6 5.6L27.8 0.8L30 5.6Z" fill="#222"/></svg><svg style="left:230.5px;top:83.5px" width="32.5" height="28.5" viewBox="0 0 32.5 28.5"><path d="M0.5 10.5C8 3.5 23 3.5 31.5 10.5L26 15C19 11.5 12 11.5 6 15Z" fill="#8fcbf6"/><path d="M0.5 10.5L6 15V27.5L0.5 21.5Z" fill="#4792cf"/><path d="M6 15C12 11.5 19 11.5 26 15V27C19 23 12 23.5 6 27.5Z" fill="#6fb3e6"/><path d="M26 15L31.5 10.5V21L26 27Z" fill="#fff" stroke="#444" stroke-width="1"/><path d="M3 4.5C10 -0.5 22 -0.5 30 4.5" fill="none" stroke="#222" stroke-width="1"/><path d="M0.8 5.6L5.4 2L5.6 6Z" fill="#222"/></svg><svg style="left:274px;top:82px" width="32" height="32" viewBox="0 0 32 32"><path d="M0.5 7L7 0.5H31.5L25.5 7Z" fill="#ececec"/><path d="M0.5 7H25.5V31.5H0.5Z" fill="#dcdcdc"/><path d="M25.5 7L31.5 0.5V25L25.5 31.5Z" fill="#bdbdbd"/><path d="M0.5 7L7 0.5H31.5V25L25.5 31.5H0.5Z" fill="none" stroke="#5a5a5a" stroke-width="1"/><circle cx="13" cy="19" r="8" fill="#f4f4f4" stroke="#5a5a5a" stroke-width="1"/><circle cx="13" cy="19" r="6" fill="#6fb3e6"/><circle cx="16" cy="16" r="4.2" fill="#f4f4f4"/></svg><svg style="left:317px;top:84px" width="28" height="28" viewBox="0 0 28 28"><path d="M3.5 3.5H24.5M3.5 3.5V24.5H24.5" fill="none" stroke="#5a5a5a" stroke-width="1"/><rect x="0.5" y="0.5" width="6" height="6" fill="#fff" stroke="#5a5a5a" stroke-width="1"/><rect x="21" y="0" width="7" height="7" fill="#6fb3e6"/><rect x="0" y="21" width="7" height="7" fill="#6fb3e6"/><rect x="21" y="21" width="7" height="7" fill="#6fb3e6"/></svg><svg style="left:372px;top:82px" width="30" height="32" viewBox="0 0 30 32"><path d="M0.5 6L6 0.5H11V31.5H0.5Z" fill="#dcdcdc" stroke="#5a5a5a" stroke-width="1"/><path d="M7 6L13 0.5H22L16.5 6Z" fill="#8fcbf6"/><path d="M7 6H16.5V31.5H7Z" fill="#6fb3e6"/><path d="M16.5 6L22 0.5V26L16.5 31.5Z" fill="#4792cf"/><path d="M19.5 15.7H26" stroke="#222" stroke-width="1.1"/><path d="M25 13.2L29.6 15.7L25 18.2Z" fill="#222"/><rect x="19" y="14.4" width="2.6" height="2.6" fill="#fff"/><path d="M20 15.7H26" stroke="#222" stroke-width="1.1"/></svg><svg style="left:414px;top:82px" width="32" height="32" viewBox="0 0 32 32"><path d="M0.5 8L7 0.5H16C25 0.5 31.5 8 31.5 16V25L25 31.5H0.5Z" fill="#dcdcdc" stroke="#5a5a5a" stroke-width="1"/><path d="M25 20.5L31.5 16V25L25 31.5Z" fill="#bdbdbd"/><path d="M12 6.5L17 0.6C25.5 0.8 31.4 8 31.4 16L25 20.5C25 13 19.5 7 12 6.5Z" fill="#6fb3e6"/><path d="M0.5 8L7 0.5H16C25 0.5 31.5 8 31.5 16V25L25 31.5H0.5Z" fill="none" stroke="#5a5a5a" stroke-width="1"/></svg><svg style="left:457px;top:82px" width="32" height="32" viewBox="0 0 32 32"><path d="M0.5 7L7 0.5H31.5L25 7Z" fill="#ececec"/><path d="M0.5 7H25V31.5H0.5Z" fill="#dcdcdc"/><path d="M25 7L31.5 0.5V25L25 31.5Z" fill="#bdbdbd"/><rect x="3.5" y="10.5" width="17.5" height="18" fill="#f0f0f0"/><path d="M4.5 12H11.5V20.5H20V21L4.5 27.5Z" fill="#4792cf"/><path d="M11.5 20.5H20V27.5H4.5Z" fill="#8fcbf6"/><path d="M0.5 7L7 0.5H31.5V25L25 31.5H0.5Z" fill="none" stroke="#5a5a5a" stroke-width="1"/></svg><svg style="left:500px;top:82px" width="32.5" height="32" viewBox="0 0 32.5 32"><path d="M10.5 6L16 0.5H32L27 6Z" fill="#8fcbf6"/><path d="M10.5 6H27V21H10.5Z" fill="#6fb3e6"/><path d="M27 6L32 0.5V16L27 21Z" fill="#4792cf"/><path d="M0.5 16L5 11.5H11L10.5 16Z" fill="#8fcbf6"/><path d="M0.5 16H10.5V21H18V31.5H0.5Z" fill="#6fb3e6"/><path d="M18 21H27L22 26.5L18 31.5Z" fill="#4792cf"/></svg><svg style="left:543px;top:82px" width="32" height="32" viewBox="0 0 32 32"><path d="M2.5 6L8 0.5H29.5L24 6Z" fill="#8fcbf6"/><path d="M2.5 6H24V15.5H2.5Z" fill="#6fb3e6"/><path d="M24 6L29.5 0.5V10L24 15.5Z" fill="#4792cf"/><path d="M2.5 20.5H24V30.5H2.5Z" fill="#dcdcdc"/><path d="M24 20.5L29.5 15V25L24 30.5Z" fill="#bdbdbd"/><path d="M2.5 20.5V30.5H24L29.5 25V15" fill="none" stroke="#5a5a5a" stroke-width="1"/><path d="M0 18.2H24.5L32 10.5" fill="none" stroke="#1c8ce0" stroke-width="1.2"/></svg><svg style="left:586px;top:82px" width="32" height="32" viewBox="0 0 32 32"><path d="M16 3V29M3 16H29" stroke="#333" stroke-width="2.2"/><path d="M16 0L21 7H11ZM16 32L21 25H11ZM0 16L7 11V21ZM32 16L25 11V21Z" fill="#333"/></svg><svg style="left:640px;top:82px" width="32" height="32" viewBox="0 0 32 32"><path d="M0.5 9L4.5 4.5H16L12.5 9Z" fill="#8fcbf6"/><path d="M0.5 9H12.5V20.5H0.5Z" fill="#6fb3e6"/><path d="M12.5 9L16 4.5V16L12.5 20.5Z" fill="#4792cf"/><path d="M0.5 20.5H12.5V31.5H0.5Z" fill="#dcdcdc" stroke="#5a5a5a" stroke-width="1"/><path d="M12.5 20.5L17 16.5H28L24 20.5Z" fill="#ececec"/><path d="M12.5 20.5H24V31.5H12.5Z" fill="#dcdcdc"/><path d="M24 20.5L28 16.5V27L24 31.5Z" fill="#bdbdbd"/><path d="M12.5 20.5H24V31.5H12.5ZM24 20.5L28 16.5V27L24 31.5" fill="none" stroke="#5a5a5a" stroke-width="1"/><path d="M23.5 1L25.2 5.7L29.5 3L27.8 7.8L32 9L27.8 10.6L30 15L25.4 12.8L23.5 17L21.8 12.8L17 15L19.4 10.6L15.5 9L19.4 7.8L17.5 3L21.8 5.7Z" fill="#f2a10c"/></svg><svg style="left:684.5px;top:84px" width="29" height="30" viewBox="0 0 29 30"><path d="M1 8L8 1.5H12.5V12H9V20L1.5 27.5Z" fill="#dcdcdc" stroke="#5a5a5a" stroke-width="1"/><path d="M5 7.5L8.5 4H12V8.5H8.5Z" fill="#ececec"/><path d="M9 12H12.5V1.5" fill="none" stroke="#5a5a5a" stroke-width="1"/><path d="M21 3.5L27.5 9.5V28L20.5 22H16.5V11.5H21Z" fill="#dcdcdc" stroke="#5a5a5a" stroke-width="1"/><path d="M16.500 11.500H20.500V22" fill="none" stroke="#5a5a5a" stroke-width="1"/><path d="M10.200 14V19M19 7V12" stroke="#1c8ce0" stroke-width="1.200"/></svg><svg style="left:740px;top:82px" width="31" height="32" viewBox="0 0 31 32"><path d="M0.5 10L8 1H17.5V22L8.5 31.5H0.5Z" fill="#dcdcdc" stroke="#5a5a5a" stroke-width="1"/><path d="M0.500 10H8.500V31" fill="none" stroke="#5a5a5a" stroke-width=".8"/><path d="M9.500 10.500L18 1.500V22L9.500 31Z" fill="#5bc17d" stroke="#3f9d5e" stroke-width=".6"/><path d="M21.500 11L30.500 1.500V21.500L21.500 31Z" fill="#e39a68" stroke="#cf824f" stroke-width=".6"/></svg><svg style="left:800px;top:90px" width="28" height="16" viewBox="0 0 28 16"><path d="M0.500 0V8.500M27.500 0V8.500M2 4.500H26" stroke="#555" stroke-width="1" fill="none"/><path d="M1.500 4.500L5 2.500V6.500ZM26.500 4.500L23 2.500V6.500Z" fill="#555"/><rect x="0" y="10.500" width="28" height="5.500" fill="#f0a30a"/><rect x="2" y="10.500" width=".7" height="1.6" fill="#8a5a00"/><rect x="4.67" y="10.500" width=".7" height="2.6" fill="#8a5a00"/><rect x="7.34" y="10.500" width=".7" height="1.6" fill="#8a5a00"/><rect x="10.01" y="10.500" width=".7" height="2.6" fill="#8a5a00"/><rect x="12.68" y="10.500" width=".7" height="1.6" fill="#8a5a00"/><rect x="15.35" y="10.500" width=".7" height="2.6" fill="#8a5a00"/><rect x="18.02" y="10.500" width=".7" height="1.6" fill="#8a5a00"/><rect x="20.69" y="10.500" width=".7" height="2.6" fill="#8a5a00"/><rect x="23.36" y="10.500" width=".7" height="1.6" fill="#8a5a00"/><rect x="26.03" y="10.500" width=".7" height="2.6" fill="#8a5a00"/></svg><svg style="left:858px;top:83px" width="29" height="29" viewBox="0 0 29 29"><rect x="0" y="0" width="29" height="29" fill="#82c6f7"/><path d="M0 19C4 11 8 10 12 15.500C15 19.500 17 22 20 18.500C23 15 26 17 29 22V29H0Z" fill="#3a8fd0"/><circle cx="21" cy="8" r="3.200" fill="#fff8c0"/><rect x=".400" y=".400" width="28.200" height="28.200" fill="none" stroke="#3a8fd0" stroke-width=".8"/></svg><svg style="left:913px;top:79px" width="38" height="38" viewBox="0 0 38 38"><rect x="0" y="0" width="38" height="38" fill="#0696d7"/><rect x="3.500" y="3.500" width="27" height="21" fill="none" stroke="#4fd36b" stroke-width="1" stroke-dasharray="3.400 1.800"/><path d="M24 18V33.500L27.600 30.200L30 35.500L32.500 34.400L30.200 29.200H35Z" fill="#fff" stroke="#111" stroke-width="1"/></svg><div class="a" style="left:850.500px;top:1130px;width:236.500px;height:23px;background:#f1f1f1"></div><svg style="left:853px;top:1133px" width="17" height="18" viewBox="0 0 17 18"><path d="M8.500 1V16.500" stroke="#333" stroke-width="2.200"/><path d="M8.500 1V16.500" stroke="#f1f1f1" stroke-width=".9"/><path d="M5.800 4L8.500 0.300L11.200 4Z" fill="#333"/><path d="M3.500 11.500C-1 9 2 6.500 8.500 6.500S17.500 9.500 13.500 11.500C11 12.700 7 12.800 4 12.200" fill="none" stroke="#333" stroke-width="1.200"/><path d="M5.500 9L1.500 12.300L6 14.500Z" fill="#333"/></svg><svg style="left:875px;top:1140px" width="5.5" height="3.6" viewBox="0 0 5.5 3.6"><path d="M0 0H5.5 L2.75 3.6Z" fill="#222"/></svg><svg style="left:886px;top:1134px" width="16" height="16" viewBox="0 0 16 16"><path d="M0.700 5.500H15.300V15.300H0.700Z" fill="#f1f1f1" stroke="#333" stroke-width="1.200"/><rect x="3.500" y="8.500" width="9" height="4" fill="#aab4c8" stroke="#333" stroke-width=".9"/><path d="M2 5.500L6.500 1.500L7 3.500L11.500 1V5.500" fill="none" stroke="#333" stroke-width="1"/></svg><svg style="left:912px;top:1133px" width="17" height="18" viewBox="0 0 17 18"><path d="M4.500 10.500L2 8.200C1 7.400 0.300 8.600 1 9.600L5 15.500C6 17 7.500 17.500 9.500 17.500C13 17.500 14.500 15.500 14.800 12L15.300 6.500C15.400 5.200 13.800 5.200 13.600 6.500L13.200 8.500L13 3.500C13 2.200 11.300 2.200 11.200 3.500L11 8L10.500 2C10.400 0.700 8.700 0.700 8.700 2L8.700 8L7.800 3.200C7.600 1.900 5.900 2.200 6.100 3.500L7 10Z" fill="#eef2f6" stroke="#333" stroke-width="1"/></svg><svg style="left:938px;top:1133px" width="17" height="18" viewBox="0 0 17 18"><circle cx="6" cy="8" r="4.800" fill="#dfe9ee" stroke="#333" stroke-width="1.300"/><path d="M9.500 11.500L13.500 15.500" stroke="#333" stroke-width="2.400"/><path d="M11.500 2.500H16.500M14 0V5M11.500 6.700H16.500" stroke="#333" stroke-width="1"/></svg><svg style="left:964px;top:1133px" width="17" height="18" viewBox="0 0 17 18"><rect x="0.500" y="0.800" width="14.500" height="13.500" fill="none" stroke="#333" stroke-width="1" stroke-dasharray="2.200 1.600"/><circle cx="7.200" cy="7.200" r="5.600" fill="#dfe9ee" stroke="#333" stroke-width="1.300"/><path d="M11.300 11.300L15.800 15.800" stroke="#333" stroke-width="2.600"/></svg><svg style="left:986px;top:1140px" width="5.5" height="3.6" viewBox="0 0 5.5 3.6"><path d="M0 0H5.5 L2.75 3.6Z" fill="#222"/></svg><svg style="left:997px;top:1134px" width="17" height="16" viewBox="0 0 17 16"><rect x="0.600" y="0.600" width="15.400" height="11.400" rx="1" fill="#e8e8e8" stroke="#333" stroke-width="1.200"/><rect x="2.600" y="2.600" width="11.400" height="7.400" fill="#a9c4ea" stroke="#3b5fa0" stroke-width=".8"/><path d="M6 12V14H4.500V15.300H12V14H10.500V12" fill="#e8e8e8" stroke="#333" stroke-width=".9"/></svg><svg style="left:1016px;top:1140px" width="5.5" height="3.6" viewBox="0 0 5.5 3.6"><path d="M0 0H5.5 L2.75 3.6Z" fill="#222"/></svg><svg style="left:1028px;top:1134px" width="16" height="16" viewBox="0 0 16 16"><rect x="0.500" y="0.500" width="15" height="15" fill="#f6f6f6"/><rect x="0.500" y="9" width="15" height="6.500" fill="#aab4c8"/><path d="M0.5 0.500V15.500M0.500 0.5H15.500" stroke="#555" stroke-width=".8"/><path d="M3.5 0.500V15.500M0.500 3.5H15.500" stroke="#555" stroke-width=".8"/><path d="M6.5 0.500V15.500M0.500 6.5H15.500" stroke="#555" stroke-width=".8"/><path d="M9.5 0.500V15.500M0.500 9.5H15.500" stroke="#555" stroke-width=".8"/><path d="M12.5 0.500V15.500M0.500 12.5H15.500" stroke="#555" stroke-width=".8"/><path d="M15.5 0.500V15.500M0.500 15.5H15.500" stroke="#555" stroke-width=".8"/></svg><svg style="left:1047px;top:1140px" width="5.5" height="3.6" viewBox="0 0 5.5 3.6"><path d="M0 0H5.5 L2.75 3.6Z" fill="#222"/></svg><svg style="left:1059px;top:1134px" width="16" height="16" viewBox="0 0 16 16"><rect x="0.8" y="1.2" width="6.400" height="5.800" rx=".8" fill="#9db8e4" stroke="#2d4f94" stroke-width="1.100"/><rect x="0.8" y="8.6" width="6.400" height="5.800" rx=".8" fill="#9db8e4" stroke="#2d4f94" stroke-width="1.100"/><rect x="8.3" y="1.2" width="6.400" height="5.800" rx=".8" fill="#9db8e4" stroke="#2d4f94" stroke-width="1.100"/><rect x="8.3" y="8.6" width="6.400" height="5.800" rx=".8" fill="#9db8e4" stroke="#2d4f94" stroke-width="1.100"/></svg><svg style="left:1078px;top:1140px" width="5.5" height="3.6" viewBox="0 0 5.5 3.6"><path d="M0 0H5.5 L2.75 3.6Z" fill="#222"/></svg><svg style="left:0;top:0" width="1928" height="1168" viewBox="0 0 1928 1168"><defs><filter id="vcb" x="-40%" y="-40%" width="180%" height="180%"><feGaussianBlur stdDeviation="5"/></filter></defs><path d="M1836 226L1868 250L1899 224L1893 205Z" fill="#000" opacity=".22" filter="url(#vcb)"/><path d="M1829.500 185.200L1863 165.300L1899.400 184.500L1865.800 209.200Z" fill="#f0f0f0" fill-opacity=".92" stroke="#777" stroke-width=".8" stroke-dasharray="4 2"/><path d="M1829.500 185.200L1865.800 209.200L1865.800 244.100L1832.900 220.800Z" fill="#e9e9e9" fill-opacity=".92" stroke="#777" stroke-width=".8" stroke-dasharray="4 2"/><path d="M1865.800 209.200L1899.400 184.500L1895.300 219.500L1865.800 244.100Z" fill="#e2e2e2" fill-opacity=".92" stroke="#777" stroke-width=".8" stroke-dasharray="4 2"/><path d="M1827.400 179.700L1832.900 220.800" stroke="#6a6aff" stroke-width="1.600"/><path d="M1832.900 220.800L1871.200 250.300" stroke="#f58a8a" stroke-width="1.600"/><text x="1822" y="177" font-size="11" fill="#6a6aff" font-family="Liberation Sans,Noto Sans CJK JP,sans-serif">Z</text><text x="1873" y="259" font-size="11" fill="#f57a7a" font-family="Liberation Sans,Noto Sans CJK JP,sans-serif">X</text><text transform="matrix(.90,.60,-.84,.50,1864.400,186.500)" x="-8" y="5.500" font-size="16" fill="#8a8f96" font-family="Liberation Sans,Noto Sans CJK JP,sans-serif">上</text><text transform="matrix(.90,.60,.09,.97,1848.500,215)" x="-8" y="6" font-size="16" fill="#8a8f96" font-family="Liberation Sans,Noto Sans CJK JP,sans-serif">前</text><text transform="matrix(.84,-.62,-.05,.96,1881.500,214.500)" x="-8" y="6" font-size="16" fill="#8a8f96" font-family="Liberation Sans,Noto Sans CJK JP,sans-serif">右</text></svg>
</body></html>
